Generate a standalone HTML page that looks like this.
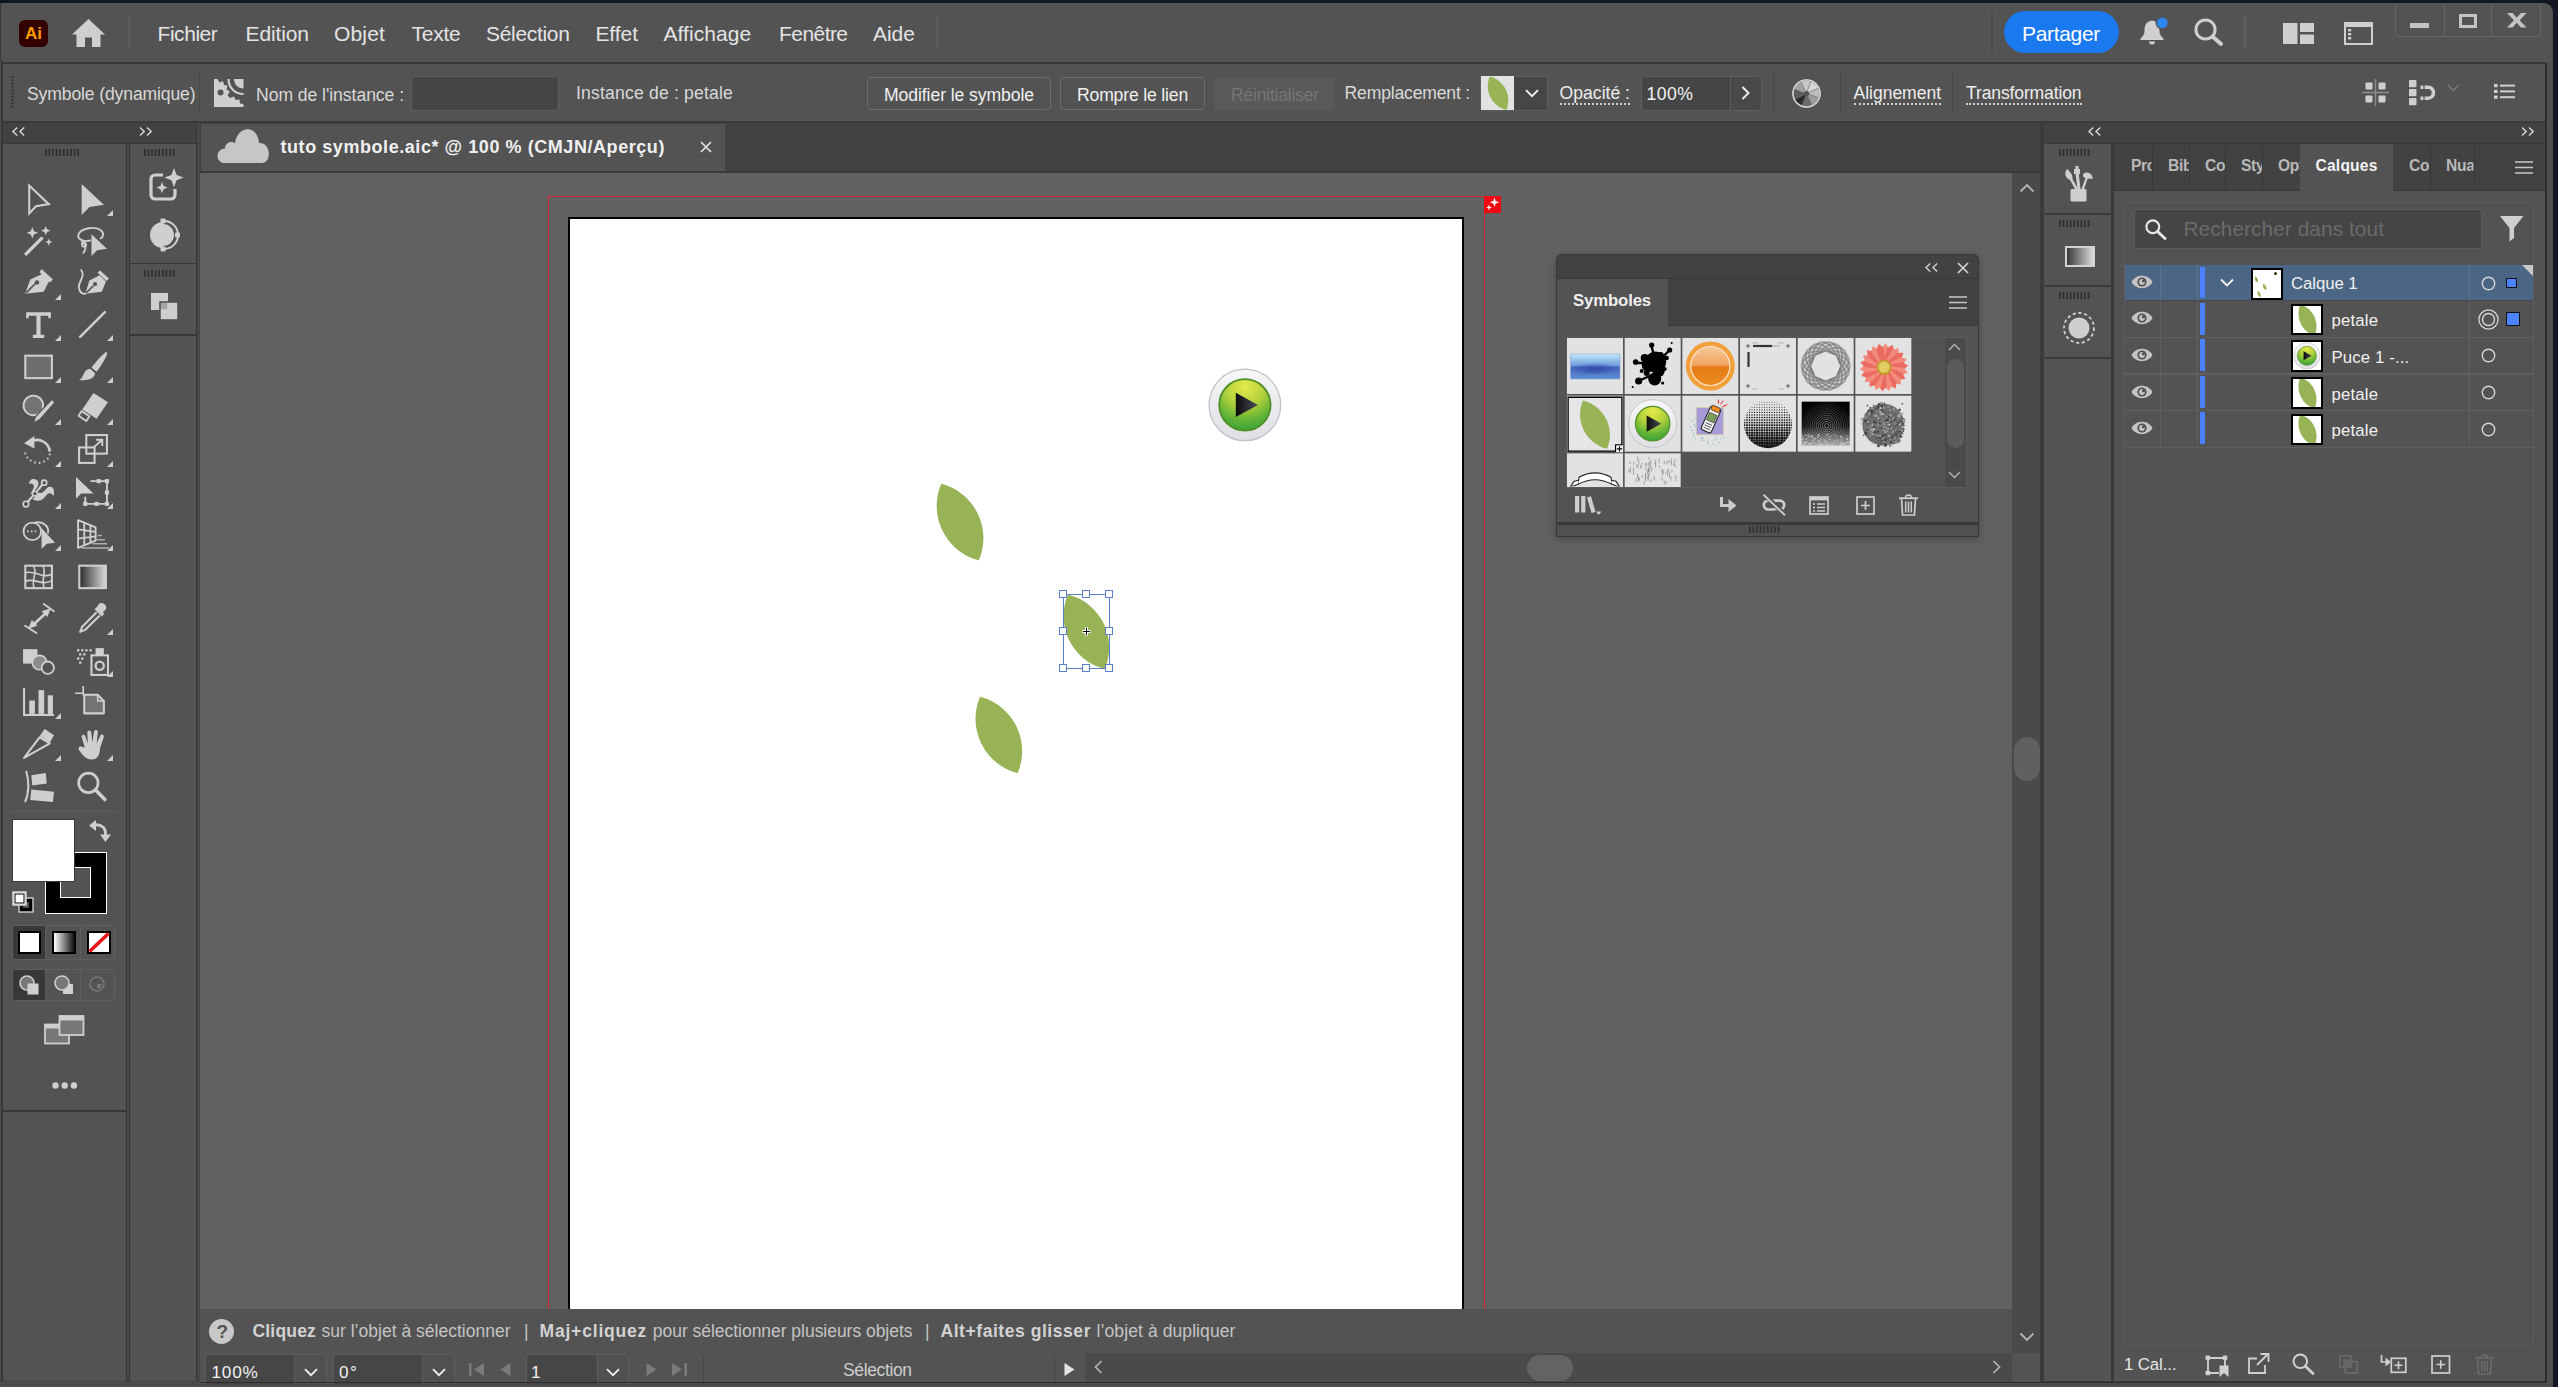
<!DOCTYPE html>
<html lang="fr"><head><meta charset="utf-8"><title>Adobe Illustrator - tuto symbole</title>
<style>
html,body{margin:0;padding:0;}
body{width:2558px;height:1387px;overflow:hidden;background:#121821;font-family:"Liberation Sans", sans-serif;}
#app{position:relative;width:2558px;height:1387px;overflow:hidden;}
#app div,#app svg,#app span{position:absolute;box-sizing:border-box;}
#app svg{overflow:visible;}
.t{white-space:pre;line-height:1;}

</style></head><body><div id="app">
<div style="left:0px;top:3px;width:2553px;height:1384px;background:#4d4d4d;border-radius:2px 9px 0 0;"></div>
<div style="left:0px;top:3px;width:2px;height:1380px;background:#3a3a3a;"></div>
<div style="left:1px;top:3px;width:2551px;height:58.7px;background:#535353;border-radius:2px 9px 0 0;"></div>
<div style="left:0px;top:61.7px;width:2546px;height:1.8999999999999986px;background:#3a3a3a;"></div>
<div style="left:2px;top:63.6px;width:2544px;height:57.4px;background:#535353;"></div>
<div style="left:0px;top:121px;width:2546px;height:2px;background:#3a3a3a;"></div>
<div style="left:2546px;top:61px;width:6px;height:1322px;background:#4f4f4f;"></div>
<div style="left:19px;top:20px;width:28.5px;height:27px;background:#330000;border-radius:6px;"></div>
<span class="t" style="left:25px;top:24.61px;font-size:17px;color:#ff9a00;font-weight:700;">Ai</span>
<svg style="left:72px;top:19px;" width="33" height="28" viewBox="0 0 33 28"><path d="M16.5 0 L33 15.5 H28.5 V28 H20 V18.5 H13 V28 H4.5 V15.5 H0 Z" fill="#cfcfcf"/></svg>
<div style="left:127.8px;top:14px;width:3.000000000000014px;height:35px;background:#5c5c5c;border-radius:1.5px;"></div>
<span class="t" style="left:157.5px;top:23.02px;font-size:21px;color:#e4e4e4;letter-spacing:-0.445px;">Fichier</span>
<span class="t" style="left:245.5px;top:23.02px;font-size:21px;color:#e4e4e4;letter-spacing:-0.131px;">Edition</span>
<span class="t" style="left:334px;top:23.02px;font-size:21px;color:#e4e4e4;letter-spacing:0.159px;">Objet</span>
<span class="t" style="left:411.6px;top:23.02px;font-size:21px;color:#e4e4e4;letter-spacing:-0.261px;">Texte</span>
<span class="t" style="left:486px;top:23.02px;font-size:21px;color:#e4e4e4;letter-spacing:-0.310px;">Sélection</span>
<span class="t" style="left:595.4px;top:23.02px;font-size:21px;color:#e4e4e4;letter-spacing:-0.042px;">Effet</span>
<span class="t" style="left:663.4px;top:23.02px;font-size:21px;color:#e4e4e4;letter-spacing:0.090px;">Affichage</span>
<span class="t" style="left:779px;top:23.02px;font-size:21px;color:#e4e4e4;letter-spacing:-0.554px;">Fenêtre</span>
<span class="t" style="left:873px;top:23.02px;font-size:21px;color:#e4e4e4;letter-spacing:-0.058px;">Aide</span>
<div style="left:936px;top:14px;width:3px;height:35px;background:#5c5c5c;border-radius:1.5px;"></div>
<div style="left:1991px;top:11px;width:2px;height:43px;background:#4c4c4c;"></div>
<div style="left:2003.5px;top:10.5px;width:115.0px;height:42.5px;background:#1a79ee;border-radius:22px;"></div>
<span class="t" style="left:2022px;top:23.02px;font-size:21px;color:#ffffff;letter-spacing:-0.318px;">Partager</span>
<svg style="left:2140px;top:18px;" width="30" height="28" viewBox="0 0 30 28"><path d="M12 2.5 C6 3 4.5 8 4.5 13 C4.5 17 2.5 18.5 0.5 20.5 V22 H23.5 V20.5 C21.5 18.5 19.5 17 19.5 13 C19.5 8 18 3 12 2.5 Z" fill="#cfcfcf"/><path d="M9 23.5 a3 3 0 0 0 6 0z" fill="#cfcfcf"/><circle cx="22.3" cy="4.8" r="6.8" fill="#535353"/><circle cx="22.3" cy="4.8" r="5.4" fill="#2b86ee"/></svg>
<svg style="left:2193.5px;top:18px;" width="30" height="28" viewBox="0 0 30 28"><circle cx="11.5" cy="11.5" r="9.6" fill="none" stroke="#cfcfcf" stroke-width="3"/><path d="M18.5 18.5 L27 26" stroke="#cfcfcf" stroke-width="4" stroke-linecap="round"/></svg>
<div style="left:2243px;top:14.5px;width:3.5px;height:34.5px;background:#5c5c5c;border-radius:1.5px;"></div>
<svg style="left:2282.5px;top:22.5px;" width="31" height="21" viewBox="0 0 31 21"><rect x="0" y="0" width="14.5" height="21" fill="#cfcfcf"/><rect x="17" y="0" width="14" height="9" fill="#cfcfcf"/><rect x="17" y="11.5" width="14" height="9.5" fill="#cfcfcf"/></svg>
<svg style="left:2344px;top:21.5px;" width="29" height="23" viewBox="0 0 29 23"><rect x="1" y="1" width="27" height="21" fill="none" stroke="#cfcfcf" stroke-width="2"/><rect x="1" y="1" width="27" height="4" fill="#cfcfcf"/><rect x="4" y="7" width="3.2" height="2.4" fill="#cfcfcf"/><rect x="4" y="11" width="3.2" height="2.4" fill="#cfcfcf"/><rect x="4" y="15" width="3.2" height="2.4" fill="#cfcfcf"/></svg>
<div style="left:2394.5px;top:3px;width:146.5px;height:33.5px;border:1.3px solid #666;border-top:none;border-radius:0 0 5px 5px;"></div>
<div style="left:2443.5px;top:3px;width:1.300000000000182px;height:33px;background:#666;"></div>
<div style="left:2491px;top:3px;width:1.300000000000182px;height:33px;background:#666;"></div>
<div style="left:2410px;top:23px;width:18.5px;height:5.300000000000001px;background:#c4c4c4;"></div>
<div style="left:2459px;top:14.3px;width:18.300000000000182px;height:14.0px;border:3.6px solid #c4c4c4;"></div>
<svg style="left:2506.5px;top:13px;" width="19.5" height="14.5" viewBox="0 0 19.5 14.5"><path d="M0 0 H5.6 L9.75 4.8 L13.9 0 H19.5 L12.6 7.25 L19.5 14.5 H13.9 L9.75 9.7 L5.6 14.5 H0 L6.9 7.25 Z" fill="#c4c4c4"/></svg>
<svg style="left:11px;top:76px;" width="3" height="34" viewBox="0 0 3 34"><rect x="0" y="0.0" width="3" height="1.8" fill="#3a3a3a"/><rect x="0" y="3.3" width="3" height="1.8" fill="#3a3a3a"/><rect x="0" y="6.6" width="3" height="1.8" fill="#3a3a3a"/><rect x="0" y="9.9" width="3" height="1.8" fill="#3a3a3a"/><rect x="0" y="13.2" width="3" height="1.8" fill="#3a3a3a"/><rect x="0" y="16.5" width="3" height="1.8" fill="#3a3a3a"/><rect x="0" y="19.8" width="3" height="1.8" fill="#3a3a3a"/><rect x="0" y="23.1" width="3" height="1.8" fill="#3a3a3a"/><rect x="0" y="26.4" width="3" height="1.8" fill="#3a3a3a"/><rect x="0" y="29.7" width="3" height="1.8" fill="#3a3a3a"/></svg>
<span class="t" style="left:27px;top:86.10px;font-size:17.6px;color:#d8d8d8;letter-spacing:-0.139px;">Symbole (dynamique)</span>
<div style="left:198.5px;top:71px;width:1.0px;height:43px;background:#494949;"></div>
<svg style="left:213.5px;top:78.5px;" width="29.5" height="28" viewBox="0 0 29.5 28"><path d="M0 0 L3.5 0 L5.5 3.5 L9 2 L10 6 L13.5 6.5 L12.5 10.5 L16 12.5 L13.5 16 L16 19 L20 17.5 L21.5 21 L25.5 20.5 L26 24.5 L29.5 25 V28 H0 Z" fill="#cfcfcf"/><circle cx="6.5" cy="13.5" r="3" fill="#535353"/><path d="M20 0 H29.5 V9.5 C24 9.5 20 5.5 20 0 Z" fill="#cfcfcf"/><path d="M14.5 0 C14.5 8.5 21 15 29.5 15" fill="none" stroke="#cfcfcf" stroke-width="2.2"/></svg>
<span class="t" style="left:256px;top:86.70px;font-size:17.6px;color:#d8d8d8;letter-spacing:-0.057px;">Nom de l'instance :</span>
<div style="left:410.5px;top:75.5px;width:148.0px;height:35.0px;background:#454545;border:1px solid #5e5e5e;border-radius:4px;"></div>
<span class="t" style="left:576px;top:84.50px;font-size:17.6px;color:#d8d8d8;letter-spacing:0.171px;">Instance de : petale</span>
<div style="left:867px;top:77px;width:183.5px;height:33px;border:1.6px solid #6c6c6c;border-radius:4px;"></div>
<span class="t" style="left:884px;top:86.80px;font-size:17.6px;color:#f0f0f0;letter-spacing:-0.082px;">Modifier le symbole</span>
<div style="left:1060px;top:77px;width:144.5px;height:33px;border:1.6px solid #6c6c6c;border-radius:4px;"></div>
<span class="t" style="left:1077px;top:86.80px;font-size:17.6px;color:#f0f0f0;letter-spacing:-0.174px;">Rompre le lien</span>
<div style="left:1213.5px;top:77px;width:121.5px;height:33px;background:#595959;border-radius:3px;"></div>
<span class="t" style="left:1231px;top:86.80px;font-size:17.6px;color:#757575;letter-spacing:-0.226px;">Réinitialiser</span>
<span class="t" style="left:1344.6px;top:85.10px;font-size:17.6px;color:#d8d8d8;letter-spacing:-0.194px;">Remplacement :</span>
<div style="left:1480px;top:75.5px;width:68px;height:35.0px;background:#464646;border:1px solid #5e5e5e;border-radius:3px;"></div>
<div style="left:1481px;top:76px;width:33px;height:34px;background:#e2e2e2;"></div>
<svg style="left:1481px;top:76px;overflow:hidden;" width="33" height="34" viewBox="0 0 33 34"><path d="M8.8 0.5 C2.8 14.3 10.6 30.2 25.3 34.0 C31.3 20.2 23.5 4.3 8.8 0.5 Z" fill="#98b256"/></svg>
<svg style="left:1524.5px;top:88.5px;" width="14" height="9" viewBox="0 0 14 9"><path d="M1 1.2 L7 7.2 L13 1.2" fill="none" stroke="#f0f0f0" stroke-width="1.9"/></svg>
<span class="t" style="left:1559.6px;top:85.10px;font-size:17.6px;color:#ececec;letter-spacing:-0.002px;">Opacité :</span>
<div style="left:1559.6px;top:102.6px;width:70.40000000000009px;height:2.4000000000000057px;border-top:2px dotted #d0d0d0;"></div>
<div style="left:1641px;top:75.5px;width:121px;height:35.0px;background:#454545;border:1px solid #5e5e5e;border-radius:4px;"></div>
<div style="left:1729.5px;top:76.5px;width:31.5px;height:33.0px;background:#494949;border-left:1px solid #5e5e5e;border-radius:0 3px 3px 0;"></div>
<span class="t" style="left:1646.5px;top:86.10px;font-size:17.6px;color:#f2f2f2;letter-spacing:0.500px;">100%</span>
<svg style="left:1740.5px;top:86px;" width="9" height="14" viewBox="0 0 9 14"><path d="M1.5 1 L7.5 7 L1.5 13" fill="none" stroke="#f0f0f0" stroke-width="1.9"/></svg>
<div style="left:1773px;top:71px;width:1px;height:43px;background:#494949;"></div>
<svg style="left:1792px;top:78.5px;" width="29" height="29" viewBox="0 0 29 29"><circle cx="14.5" cy="14.5" r="14" fill="#c9c9c9"/><path d="M14.5 14.5 L26.28 9.01 A13 13 0 0 1 26.72 18.95 Z" fill="#bdbdbd" stroke="#6a6a6a" stroke-width=".5"/><path d="M14.5 14.5 L26.72 18.95 A13 13 0 0 1 19.99 26.28 Z" fill="#9c9c9c" stroke="#6a6a6a" stroke-width=".5"/><path d="M14.5 14.5 L19.99 26.28 A13 13 0 0 1 10.05 26.72 Z" fill="#6a6a6a" stroke="#6a6a6a" stroke-width=".5"/><path d="M14.5 14.5 L10.05 26.72 A13 13 0 0 1 2.72 19.99 Z" fill="#2c2c2c" stroke="#6a6a6a" stroke-width=".5"/><path d="M14.5 14.5 L2.72 19.99 A13 13 0 0 1 2.28 10.05 Z" fill="#5c5c5c" stroke="#6a6a6a" stroke-width=".5"/><path d="M14.5 14.5 L2.28 10.05 A13 13 0 0 1 9.01 2.72 Z" fill="#a2a2a2" stroke="#6a6a6a" stroke-width=".5"/><path d="M14.5 14.5 L9.01 2.72 A13 13 0 0 1 18.95 2.28 Z" fill="#c8c8c8" stroke="#6a6a6a" stroke-width=".5"/><path d="M14.5 14.5 L18.95 2.28 A13 13 0 0 1 26.28 9.01 Z" fill="#d6d6d6" stroke="#6a6a6a" stroke-width=".5"/><circle cx="14.5" cy="14.5" r="13.6" fill="none" stroke="#d6d6d6" stroke-width="1.4"/><circle cx="14.5" cy="14.5" r="2.6" fill="#535353"/></svg>
<div style="left:1840px;top:71px;width:1px;height:43px;background:#494949;"></div>
<span class="t" style="left:1853.6px;top:85.10px;font-size:17.6px;color:#ececec;letter-spacing:-0.063px;">Alignement</span>
<div style="left:1853.6px;top:103.2px;width:87.40000000000009px;height:2.799999999999997px;border-top:2px dotted #d0d0d0;"></div>
<div style="left:1952px;top:71px;width:1px;height:43px;background:#494949;"></div>
<span class="t" style="left:1966px;top:85.10px;font-size:17.6px;color:#ececec;letter-spacing:-0.155px;">Transformation</span>
<div style="left:1966px;top:103.2px;width:115.5px;height:2.799999999999997px;border-top:2px dotted #d0d0d0;"></div>
<svg style="left:2362px;top:79px;" width="27" height="27" viewBox="0 0 27 27"><path d="M0 13.5 H27 M13.5 0 V27" stroke="#8c8c8c" stroke-width="1.5"/><g fill="#cfcfcf"><rect x="3.5" y="3.5" width="7" height="7" rx="1"/><rect x="16.5" y="3.5" width="7" height="7" rx="1"/><rect x="3.5" y="16.5" width="7" height="7" rx="1"/><rect x="16.5" y="16.5" width="7" height="7" rx="1"/></g></svg>
<svg style="left:2408.5px;top:80px;" width="27" height="26" viewBox="0 0 27 26"><g fill="#cfcfcf"><rect x="0" y="0" width="7.5" height="7.2" rx="1"/><rect x="0" y="9" width="7.5" height="7.2" rx="1"/><rect x="0" y="18" width="7.5" height="7.2" rx="1"/></g><path d="M11.5 7.2 H19 A5.5 5.5 0 0 1 19 18.2 H11.5" fill="none" stroke="#cfcfcf" stroke-width="3.6"/><path d="M15 4.5 V10 M15 15.5 V21" stroke="#535353" stroke-width="1.2"/></svg>
<svg style="left:2446.5px;top:84.2px;" width="13" height="8" viewBox="0 0 13 8"><path d="M1 1 L6.5 6.5 L12 1" fill="none" stroke="#777" stroke-width="1.6"/></svg>
<svg style="left:2493.5px;top:83.6px;" width="21" height="15" viewBox="0 0 21 15"><g fill="#cfcfcf"><rect x="0" y="0" width="3.6" height="3.2"/><rect x="0" y="5.8" width="3.6" height="3.2"/><rect x="0" y="11.6" width="3.6" height="3.2"/><rect x="6" y="0.6" width="15" height="2"/><rect x="6" y="6.4" width="15" height="2"/><rect x="6" y="12.2" width="15" height="2"/></g></svg>
<div style="left:2px;top:123px;width:194px;height:20px;background:#424242;"></div>
<svg style="left:12px;top:127px;" width="14" height="9" viewBox="0 0 14 9"><path d="M5.2 0.5 L1 4.5 L5.2 8.5 M12.2 0.5 L8 4.5 L12.2 8.5" fill="none" stroke="#d8d8d8" stroke-width="1.4"/></svg>
<svg style="left:139px;top:127px;" width="14" height="9" viewBox="0 0 14 9"><path d="M1 0.5 L5.2 4.5 L1 8.5 M8 0.5 L12.2 4.5 L8 8.5" fill="none" stroke="#d8d8d8" stroke-width="1.4"/></svg>
<div style="left:0px;top:143px;width:200px;height:1239px;background:#474747;"></div>
<div style="left:0px;top:143px;width:200px;height:1.1999999999999886px;background:#373737;"></div>
<div style="left:0px;top:61px;width:1.4px;height:1322px;background:#4d4d4d;"></div>
<div style="left:1.4px;top:61px;width:1.3000000000000003px;height:1321px;background:#373737;"></div>
<div style="left:2.7px;top:144px;width:123.0px;height:966.4000000000001px;background:#535353;"></div>
<div style="left:2.7px;top:1110.4px;width:123.0px;height:1.5px;background:#373737;"></div>
<div style="left:2.7px;top:1111.9px;width:123.0px;height:269.0999999999999px;background:#535353;"></div>
<div style="left:125.7px;top:144px;width:1.3999999999999915px;height:1238px;background:#373737;"></div>
<div style="left:129.9px;top:144px;width:65.69999999999999px;height:118.69999999999999px;background:#535353;"></div>
<div style="left:129.9px;top:262.7px;width:65.69999999999999px;height:1.5px;background:#373737;"></div>
<div style="left:129.9px;top:264.2px;width:65.69999999999999px;height:69.90000000000003px;background:#535353;"></div>
<div style="left:129.9px;top:334.1px;width:65.69999999999999px;height:1.5px;background:#373737;"></div>
<div style="left:129.9px;top:335.6px;width:65.69999999999999px;height:1045.4px;background:#535353;"></div>
<div style="left:128.6px;top:144px;width:1.3000000000000114px;height:1238px;background:#373737;"></div>
<div style="left:195.6px;top:123px;width:1.4000000000000057px;height:1259px;background:#373737;"></div>
<div style="left:197px;top:123px;width:3px;height:1259px;background:#474747;"></div>
<svg style="left:45px;top:149px;" width="36" height="7" viewBox="0 0 36 7"><rect x="0.0" y="0" width="1.6" height="7" fill="#2e2e2e"/><rect x="3.6" y="0" width="1.6" height="7" fill="#2e2e2e"/><rect x="7.2" y="0" width="1.6" height="7" fill="#2e2e2e"/><rect x="10.8" y="0" width="1.6" height="7" fill="#2e2e2e"/><rect x="14.4" y="0" width="1.6" height="7" fill="#2e2e2e"/><rect x="18.0" y="0" width="1.6" height="7" fill="#2e2e2e"/><rect x="21.6" y="0" width="1.6" height="7" fill="#2e2e2e"/><rect x="25.2" y="0" width="1.6" height="7" fill="#2e2e2e"/><rect x="28.8" y="0" width="1.6" height="7" fill="#2e2e2e"/><rect x="32.4" y="0" width="1.6" height="7" fill="#2e2e2e"/></svg>
<svg style="left:144px;top:149px;" width="34" height="7" viewBox="0 0 34 7"><rect x="0.0" y="0" width="1.6" height="7" fill="#2e2e2e"/><rect x="3.6" y="0" width="1.6" height="7" fill="#2e2e2e"/><rect x="7.2" y="0" width="1.6" height="7" fill="#2e2e2e"/><rect x="10.8" y="0" width="1.6" height="7" fill="#2e2e2e"/><rect x="14.4" y="0" width="1.6" height="7" fill="#2e2e2e"/><rect x="18.0" y="0" width="1.6" height="7" fill="#2e2e2e"/><rect x="21.6" y="0" width="1.6" height="7" fill="#2e2e2e"/><rect x="25.2" y="0" width="1.6" height="7" fill="#2e2e2e"/><rect x="28.8" y="0" width="1.6" height="7" fill="#2e2e2e"/></svg>
<svg style="left:144px;top:270px;" width="34" height="7" viewBox="0 0 34 7"><rect x="0.0" y="0" width="1.6" height="7" fill="#2e2e2e"/><rect x="3.6" y="0" width="1.6" height="7" fill="#2e2e2e"/><rect x="7.2" y="0" width="1.6" height="7" fill="#2e2e2e"/><rect x="10.8" y="0" width="1.6" height="7" fill="#2e2e2e"/><rect x="14.4" y="0" width="1.6" height="7" fill="#2e2e2e"/><rect x="18.0" y="0" width="1.6" height="7" fill="#2e2e2e"/><rect x="21.6" y="0" width="1.6" height="7" fill="#2e2e2e"/><rect x="25.2" y="0" width="1.6" height="7" fill="#2e2e2e"/><rect x="28.8" y="0" width="1.6" height="7" fill="#2e2e2e"/></svg>
<svg style="left:22.200000000000003px;top:182.5px;" width="33" height="33" viewBox="0 0 32 32"><path d="M7 2.5 L7 29.5 L13.6 22.6 L26 20.5 Z" fill="none" stroke="#cfcfcf" stroke-width="2" stroke-linejoin="miter"/></svg>
<svg style="left:75.8px;top:182.5px;" width="33" height="33" viewBox="0 0 32 32"><path d="M5.5 1 L5.5 31 L13 23.2 L27 21 Z" fill="#cfcfcf"/></svg>
<svg style="left:107.3px;top:210px;" width="6" height="6" viewBox="0 0 6 6"><path d="M6 0 V6 H0 Z" fill="#cfcfcf"/></svg>
<svg style="left:22.200000000000003px;top:224.5px;" width="33" height="33" viewBox="0 0 32 32"><path d="M4 28 L19 13" stroke="#cfcfcf" stroke-width="3.2" stroke-linecap="round"/><path d="M10 2 l1.6 4 4 1.6 -4 1.6 -1.6 4 -1.6 -4 -4 -1.6 4 -1.6z M23 1 l1.3 3.2 3.2 1.3 -3.2 1.3 -1.3 3.2 -1.3 -3.2 -3.2 -1.3 3.2 -1.3z M26 13 l1 2.5 2.5 1 -2.5 1 -1 2.5 -1 -2.5 -2.5 -1 2.5 -1z" fill="#cfcfcf"/></svg>
<svg style="left:75.8px;top:224.5px;" width="33" height="33" viewBox="0 0 32 32"><path d="M14 15 C6 17 0 13 3 8 C6 3 18 1 24 5 C28 8 26 12 24 13 M8 16 C5 17 5 21 8 21 C11 21 10 17 7 17 C10 19 10 24 7 27" fill="none" stroke="#cfcfcf" stroke-width="1.8" stroke-linecap="round"/><path d="M15 9 L15 30 L20.5 24.5 L30 23 Z" fill="#cfcfcf"/></svg>
<svg style="left:22.200000000000003px;top:266.0px;" width="33" height="33" viewBox="0 0 32 32"><path d="M3 27 L8 13 L19 8 L26 15 L21 25 Z M19 3 L30 13 L27 16 L17 6 Z" fill="#cfcfcf"/><path d="M4 26 L13 17" stroke="#535353" stroke-width="1.6"/><circle cx="14.5" cy="16" r="2.2" fill="#535353"/></svg>
<svg style="left:54.7px;top:293.5px;" width="6" height="6" viewBox="0 0 6 6"><path d="M6 0 V6 H0 Z" fill="#cfcfcf"/></svg>
<svg style="left:75.8px;top:266.0px;" width="33" height="33" viewBox="0 0 32 32"><path d="M9 27 L13 14 L23 9 L29 15 L25 25 Z M23 4 L32 12 L29.5 14.5 L21 6.5 Z" fill="#cfcfcf"/><path d="M10 26 L17 19" stroke="#535353" stroke-width="1.5"/><circle cx="18.5" cy="17.5" r="2" fill="#535353"/><path d="M5 4 C10 10 1 16 3 22 C4 26 7 27 9 27" fill="none" stroke="#cfcfcf" stroke-width="1.8" stroke-linecap="round"/></svg>
<svg style="left:22.200000000000003px;top:307.5px;" width="33" height="33" viewBox="0 0 32 32"><path d="M4 4 H28 V10 H25.5 V7.5 H18 V26 H21.5 V29 H10.5 V26 H14 V7.5 H6.5 V10 H4 Z" fill="#cfcfcf"/></svg>
<svg style="left:54.7px;top:335px;" width="6" height="6" viewBox="0 0 6 6"><path d="M6 0 V6 H0 Z" fill="#cfcfcf"/></svg>
<svg style="left:75.8px;top:307.5px;" width="33" height="33" viewBox="0 0 32 32"><path d="M4 28 L28 4" stroke="#cfcfcf" stroke-width="2.4" stroke-linecap="round"/></svg>
<svg style="left:107.3px;top:335px;" width="6" height="6" viewBox="0 0 6 6"><path d="M6 0 V6 H0 Z" fill="#cfcfcf"/></svg>
<svg style="left:22.200000000000003px;top:349.5px;" width="33" height="33" viewBox="0 0 32 32"><rect x="3.2" y="5.5" width="25.8" height="21.8" fill="#6e6e6e" stroke="#cfcfcf" stroke-width="2"/></svg>
<svg style="left:54.7px;top:377px;" width="6" height="6" viewBox="0 0 6 6"><path d="M6 0 V6 H0 Z" fill="#cfcfcf"/></svg>
<svg style="left:75.8px;top:349.5px;" width="33" height="33" viewBox="0 0 32 32"><path d="M30 2 C31 4 27 12 20 21 L15 17 C22 8 28 2 30 2 Z M14 18.5 L18.5 22.5 C18 28 11 30 3 29 C7 27 7 23 9 20.5 C10.5 18.5 12.5 18 14 18.5 Z" fill="#cfcfcf"/></svg>
<svg style="left:107.3px;top:377px;" width="6" height="6" viewBox="0 0 6 6"><path d="M6 0 V6 H0 Z" fill="#cfcfcf"/></svg>
<svg style="left:22.200000000000003px;top:391.0px;" width="33" height="33" viewBox="0 0 32 32"><circle cx="11" cy="14" r="9.5" fill="#737373" stroke="#cfcfcf" stroke-width="1.8"/><path d="M13 25 L29 8 L32 11 L17 28 L11 31 Z" fill="#cfcfcf" stroke="#535353" stroke-width="1.2"/></svg>
<svg style="left:54.7px;top:418.5px;" width="6" height="6" viewBox="0 0 6 6"><path d="M6 0 V6 H0 Z" fill="#cfcfcf"/></svg>
<svg style="left:75.8px;top:391.0px;" width="33" height="33" viewBox="0 0 32 32"><path d="M17 2 L31 11 L20 27 L6 18 Z" fill="#cfcfcf"/><path d="M5.5 19.5 L13 24.5 L10 29 L2.5 24 Z" fill="none" stroke="#cfcfcf" stroke-width="1.8" stroke-linejoin="round"/></svg>
<svg style="left:107.3px;top:418.5px;" width="6" height="6" viewBox="0 0 6 6"><path d="M6 0 V6 H0 Z" fill="#cfcfcf"/></svg>
<svg style="left:22.200000000000003px;top:433.0px;" width="33" height="33" viewBox="0 0 32 32"><path d="M8 9 C15 4 26 8 27 18" fill="none" stroke="#cfcfcf" stroke-width="2.6"/><path d="M2 10 L12 3 L12 15 Z" fill="#cfcfcf"/><path d="M27 20 C26 27 18 31 11 28 C6 26 3 22 3 18" fill="none" stroke="#cfcfcf" stroke-width="2" stroke-dasharray="1.5 3"/></svg>
<svg style="left:54.7px;top:460.5px;" width="6" height="6" viewBox="0 0 6 6"><path d="M6 0 V6 H0 Z" fill="#cfcfcf"/></svg>
<svg style="left:75.8px;top:433.0px;" width="33" height="33" viewBox="0 0 32 32"><rect x="3" y="14" width="15" height="15" fill="none" stroke="#cfcfcf" stroke-width="2"/><rect x="10" y="2" width="20" height="18" fill="none" stroke="#cfcfcf" stroke-width="2"/><path d="M17 14 L25 7 M19.5 6.5 H25.5 V12.5" fill="none" stroke="#cfcfcf" stroke-width="1.8"/></svg>
<svg style="left:107.3px;top:460.5px;" width="6" height="6" viewBox="0 0 6 6"><path d="M6 0 V6 H0 Z" fill="#cfcfcf"/></svg>
<svg style="left:22.200000000000003px;top:475.5px;" width="33" height="33" viewBox="0 0 32 32"><path d="M9 3.5 C14 1.5 18 6 15 10.5 C13 13.5 14 16.5 18 16.5 C22 16.5 22.5 11.5 26.5 10.5 C30.5 9.5 32 15 30.5 19.5 C29 17 27.5 16 25.5 17 C22.5 18.5 21.5 24 15.5 24 C9.5 24 7 19 9.5 15 C11 12.5 12.5 10 10.5 8 C9.5 7 8 7.2 7 8.2 C6.8 6 7.8 4.2 9 3.5 Z" fill="#cfcfcf"/><path d="M3.5 27.5 L21.5 6.5" stroke="#cfcfcf" stroke-width="1.8"/><path d="M9 21 L16 13" stroke="#535353" stroke-width="4.2"/><path d="M3.5 27.5 L21.5 6.5" stroke="#cfcfcf" stroke-width="1.8"/><circle cx="3.8" cy="27.2" r="2.7" fill="#535353" stroke="#cfcfcf" stroke-width="1.6"/><circle cx="21.5" cy="6.5" r="2.5" fill="#535353" stroke="#cfcfcf" stroke-width="1.6"/><circle cx="12.6" cy="17" r="2.3" fill="#535353" stroke="#cfcfcf" stroke-width="1.4"/></svg>
<svg style="left:54.7px;top:503px;" width="6" height="6" viewBox="0 0 6 6"><path d="M6 0 V6 H0 Z" fill="#cfcfcf"/></svg>
<svg style="left:75.8px;top:475.5px;" width="33" height="33" viewBox="0 0 32 32"><path d="M0 1 L0 22 L5 17 L17 17 Z" fill="#cfcfcf"/><path d="M14 5 H30 V27 H9 V20" fill="none" stroke="#cfcfcf" stroke-width="1.8"/><g fill="#cfcfcf"><rect x="20" y="3" width="4" height="4"/><rect x="28" y="3" width="4" height="4"/><rect x="28" y="14" width="4" height="4"/><rect x="28" y="25" width="4" height="4"/><rect x="18" y="25" width="4" height="4"/><rect x="7" y="25" width="4" height="4"/></g></svg>
<svg style="left:107.3px;top:503px;" width="6" height="6" viewBox="0 0 6 6"><path d="M6 0 V6 H0 Z" fill="#cfcfcf"/></svg>
<svg style="left:22.200000000000003px;top:517.5px;" width="33" height="33" viewBox="0 0 32 32"><circle cx="10" cy="13" r="8.5" fill="none" stroke="#cfcfcf" stroke-width="1.8"/><path d="M11 5 C20 2 27 8 25 15" fill="none" stroke="#cfcfcf" stroke-width="1.8"/><path d="M5 13 H14" stroke="#cfcfcf" stroke-width="1.8" stroke-dasharray="1.6 2"/><path d="M19 10 L19 30 L24 25 L32 24 Z" fill="#cfcfcf"/></svg>
<svg style="left:54.7px;top:545px;" width="6" height="6" viewBox="0 0 6 6"><path d="M6 0 V6 H0 Z" fill="#cfcfcf"/></svg>
<svg style="left:75.8px;top:517.5px;" width="33" height="33" viewBox="0 0 32 32"><path d="M2 2 L19 9 V22 L2 29 Z M2 11 L19 13.5 M2 20 L19 17.8 M8 4.5 V26.5 M14 7 V24" fill="none" stroke="#cfcfcf" stroke-width="1.8" stroke-linejoin="round"/><path d="M21 17 H25 M20 21 H28 M16 25 H30 M5 29 H32" stroke="#cfcfcf" stroke-width="1.4" opacity=".75"/></svg>
<svg style="left:107.3px;top:545px;" width="6" height="6" viewBox="0 0 6 6"><path d="M6 0 V6 H0 Z" fill="#cfcfcf"/></svg>
<svg style="left:22.200000000000003px;top:559.5px;" width="33" height="33" viewBox="0 0 32 32"><rect x="3.2" y="5.5" width="25.8" height="21.8" fill="none" stroke="#cfcfcf" stroke-width="2"/><path d="M3.2 12.5 C12 9 19 19 29 13.5 M3.2 21 C11 16 19 26 29 20 M11 5.5 C16 12 8 20 12 27.3 M20 5.5 C25 12 17 20 22 27.3" fill="none" stroke="#cfcfcf" stroke-width="1.6"/></svg>
<svg style="left:75.8px;top:559.5px;" width="33" height="33" viewBox="0 0 32 32"><defs><linearGradient id="tg" x1="0" x2="1"><stop offset="0" stop-color="#2c2c2c"/><stop offset="1" stop-color="#dadada"/></linearGradient></defs><rect x="3.2" y="5.5" width="25.8" height="21.8" fill="url(#tg)" stroke="#cfcfcf" stroke-width="2"/></svg>
<svg style="left:22.200000000000003px;top:601.5px;" width="33" height="33" viewBox="0 0 32 32"><path d="M3 23 L14 30 M21 2 L31 9" stroke="#cfcfcf" stroke-width="1.8" stroke-linecap="round"/><path d="M10 23 L25 9" stroke="#cfcfcf" stroke-width="2.6"/><path d="M6 26 L9.5 17.5 L15 23 Z M28 6 L24.5 14.5 L19 9 Z" fill="#cfcfcf"/></svg>
<svg style="left:75.8px;top:601.5px;" width="33" height="33" viewBox="0 0 32 32"><path d="M22 2 C25 -1 31 3 29 7 L26 10 L27.5 11.5 L25 14 L18 7 L20.5 4.5 Z" fill="#cfcfcf"/><path d="M20 10 L6 24 L4 29 L9 27 L23 13" fill="none" stroke="#cfcfcf" stroke-width="2" stroke-linejoin="round"/></svg>
<svg style="left:107.3px;top:629px;" width="6" height="6" viewBox="0 0 6 6"><path d="M6 0 V6 H0 Z" fill="#cfcfcf"/></svg>
<svg style="left:22.200000000000003px;top:643.5px;" width="33" height="33" viewBox="0 0 32 32"><rect x="1" y="5" width="14" height="14" fill="#cfcfcf"/><circle cx="17" cy="18" r="7" fill="#8a8a8a" stroke="#cfcfcf" stroke-width="1.6"/><circle cx="25" cy="23" r="6" fill="#535353" stroke="#cfcfcf" stroke-width="1.8"/></svg>
<svg style="left:75.8px;top:643.5px;" width="33" height="33" viewBox="0 0 32 32"><rect x="15" y="11" width="16" height="19" fill="none" stroke="#cfcfcf" stroke-width="2"/><rect x="19" y="4" width="8" height="7" fill="#cfcfcf"/><circle cx="23" cy="21" r="4" fill="none" stroke="#cfcfcf" stroke-width="2.2"/><g fill="#cfcfcf"><rect x="1" y="5" width="2.2" height="2.2"/><rect x="5" y="5" width="2.2" height="2.2"/><rect x="9" y="5" width="2.2" height="2.2"/><rect x="13" y="5" width="2.2" height="2.2"/><rect x="3" y="9" width="2.2" height="2.2"/><rect x="7" y="9" width="2.2" height="2.2"/><rect x="1" y="13" width="2.2" height="2.2"/><rect x="5" y="13" width="2.2" height="2.2"/><rect x="3" y="17" width="2.2" height="2.2"/></g></svg>
<svg style="left:107.3px;top:671px;" width="6" height="6" viewBox="0 0 6 6"><path d="M6 0 V6 H0 Z" fill="#cfcfcf"/></svg>
<svg style="left:22.200000000000003px;top:685.0px;" width="33" height="33" viewBox="0 0 32 32"><path d="M2 3 V29 H31" fill="none" stroke="#cfcfcf" stroke-width="2"/><rect x="7" y="15" width="5.5" height="13" fill="#cfcfcf"/><rect x="16" y="5" width="5.5" height="23" fill="#cfcfcf"/><rect x="25" y="10" width="5" height="18" fill="#cfcfcf"/></svg>
<svg style="left:54.7px;top:712.5px;" width="6" height="6" viewBox="0 0 6 6"><path d="M6 0 V6 H0 Z" fill="#cfcfcf"/></svg>
<svg style="left:75.8px;top:685.0px;" width="33" height="33" viewBox="0 0 32 32"><path d="M7 1 V10 M-1 8 H7" stroke="#cfcfcf" stroke-width="1.6" fill="none"/><path d="M8 9.5 H21 L27 15.5 V27.5 H8 Z" fill="#737373" stroke="#cfcfcf" stroke-width="2" stroke-linejoin="round"/><path d="M21 9.5 V15.5 H27" fill="none" stroke="#cfcfcf" stroke-width="1.6"/></svg>
<svg style="left:22.200000000000003px;top:727.5px;" width="33" height="33" viewBox="0 0 32 32"><path d="M2 29 L17 9 L27 15 Z" fill="none" stroke="#cfcfcf" stroke-width="2" stroke-linejoin="round"/><path d="M17 8 L22 1 L31 7 L27 14 Z" fill="#cfcfcf"/></svg>
<svg style="left:54.7px;top:755px;" width="6" height="6" viewBox="0 0 6 6"><path d="M6 0 V6 H0 Z" fill="#cfcfcf"/></svg>
<svg style="left:75.8px;top:727.5px;" width="33" height="33" viewBox="0 0 32 32"><path d="M8.5 19 L5.5 9 C4.8 6.5 8 5.3 9 8 L11.5 15 L11 4.5 C11 1.8 14.6 1.8 14.8 4.5 L15.8 14 L17.5 3.5 C18 1 21.5 1.5 21.2 4.2 L20 15 L23.5 7.5 C24.6 5.2 27.8 6.6 26.8 9.2 L23.5 19 C23 26 21 30.5 15.5 30.5 C10 30.5 7 27 3 21.5 C1.2 19 4 17 6 18.5 Z" fill="#cfcfcf"/></svg>
<svg style="left:107.3px;top:755px;" width="6" height="6" viewBox="0 0 6 6"><path d="M6 0 V6 H0 Z" fill="#cfcfcf"/></svg>
<svg style="left:22.200000000000003px;top:770.0px;" width="33" height="33" viewBox="0 0 32 32"><path d="M4 1 C7 10 7 22 3 31" fill="none" stroke="#cfcfcf" stroke-width="2"/><path d="M9 5 L23 3 L24 13 L10 15 Z M9 19 L31 21 L30 31 L8 29 Z" fill="#cfcfcf"/></svg>
<svg style="left:75.8px;top:770.0px;" width="33" height="33" viewBox="0 0 32 32"><circle cx="12" cy="12.5" r="9.4" fill="none" stroke="#cfcfcf" stroke-width="2.6"/><path d="M19 19.5 L28 28.5" stroke="#cfcfcf" stroke-width="3.4" stroke-linecap="round"/></svg>
<svg style="left:149px;top:167px;" width="34" height="34" viewBox="0 0 34 34"><rect x="2" y="8" width="24" height="24" rx="4" fill="none" stroke="#cfcfcf" stroke-width="3.2"/><rect x="14" y="0" width="20" height="22" fill="#535353"/><path d="M25 1 l2.6 7 7 2.6 -7 2.6 -2.6 7 -2.6 -7 -7 -2.6 7 -2.6z M13 15 l1.6 4 4 1.6 -4 1.6 -1.6 4 -1.6 -4 -4 -1.6 4 -1.6z" fill="#cfcfcf"/></svg>
<svg style="left:148px;top:218px;" width="34" height="34" viewBox="0 0 34 34"><circle cx="15" cy="17" r="13" fill="#cfcfcf"/><path d="M15 3.5 A13.5 13.5 0 0 1 15 30.5" fill="none" stroke="#535353" stroke-width="5"/><path d="M16 3 A14 14 0 0 1 16 31" fill="none" stroke="#cfcfcf" stroke-width="2"/><rect x="12.5" y="0.5" width="5" height="5" rx="1" fill="#cfcfcf"/><rect x="12.5" y="28.5" width="5" height="5" rx="1" fill="#cfcfcf"/><rect x="27" y="14.5" width="5" height="5" rx="1" fill="#cfcfcf"/></svg>
<svg style="left:151px;top:293px;" width="28" height="28" viewBox="0 0 28 28"><rect x="0" y="0" width="17" height="17" fill="#cfcfcf"/><rect x="9" y="9" width="18" height="18" fill="#cfcfcf" stroke="#535353" stroke-width="1.6"/><rect x="9.8" y="9.8" width="6.4" height="6.4" fill="#535353" opacity=".35"/></svg>
<div style="left:12px;top:811px;width:104px;height:1px;background:#5e5e5e;"></div>
<div style="left:45px;top:852px;width:62px;height:62px;background:#000;border:1px solid #fff;"></div>
<div style="left:60px;top:867px;width:31px;height:31px;background:#535353;border:1px solid #fff;"></div>
<div style="left:12px;top:819px;width:63px;height:63px;background:#fff;border:1px solid #3a3a3a;"></div>
<svg style="left:89px;top:820px;" width="22" height="22" viewBox="0 0 22 22"><path d="M5 5 C13 4 17 8 16.5 15" fill="none" stroke="#cfcfcf" stroke-width="3"/><path d="M0 5.5 L7 0 V11 Z M16.5 22 L11 14.5 H22 Z" fill="#cfcfcf"/></svg>
<svg style="left:12px;top:891px;" width="22" height="22" viewBox="0 0 22 22"><rect x="7" y="7" width="14" height="14" fill="#000" stroke="#cfcfcf" stroke-width="1.4"/><rect x="11" y="11" width="6" height="6" fill="#535353"/><rect x="1" y="1" width="13" height="13" fill="#fff" stroke="#cfcfcf" stroke-width="1.6"/><rect x="3" y="3" width="9" height="9" fill="#fff" stroke="#000" stroke-width="1"/></svg>
<div style="left:12px;top:925px;width:103px;height:35px;border:1px solid #5e5e5e;border-radius:3px;"></div>
<div style="left:13px;top:926px;width:32px;height:33px;background:#383838;border-radius:2px 0 0 2px;"></div>
<div style="left:45px;top:926px;width:1px;height:33px;background:#5e5e5e;"></div>
<div style="left:80px;top:926px;width:1px;height:33px;background:#5e5e5e;"></div>
<div style="left:12px;top:968.5px;width:103px;height:32.0px;border:1px solid #5e5e5e;border-radius:3px;"></div>
<div style="left:13px;top:969.5px;width:32px;height:30.0px;background:#383838;border-radius:2px 0 0 2px;"></div>
<div style="left:45px;top:969.5px;width:1px;height:30.0px;background:#5e5e5e;"></div>
<div style="left:80px;top:969.5px;width:1px;height:30.0px;background:#5e5e5e;"></div>
<div style="left:18px;top:931px;width:23px;height:23px;background:#fff;border:2px solid #000;"></div>
<div style="left:52px;top:931px;width:24px;height:23px;border:2px solid #000;background:linear-gradient(90deg,#fff,#111);"></div>
<svg style="left:87px;top:931px;" width="24" height="23" viewBox="0 0 24 23"><rect x="1" y="1" width="22" height="21" fill="#fff" stroke="#000" stroke-width="2"/><path d="M2.5 20.5 L21.5 2.5" stroke="#e8141c" stroke-width="3.6"/></svg>
<svg style="left:19px;top:975px;" width="20" height="20" viewBox="0 0 20 20"><circle cx="8" cy="8" r="7" fill="#777" stroke="#cfcfcf" stroke-width="1.6"/><rect x="8.5" y="8.5" width="11" height="11" fill="#cfcfcf"/></svg>
<svg style="left:54px;top:975px;" width="20" height="20" viewBox="0 0 20 20"><rect x="9" y="9" width="10" height="10" fill="#cfcfcf"/><circle cx="8" cy="8" r="7" fill="#777" stroke="#cfcfcf" stroke-width="1.6"/></svg>
<svg style="left:89px;top:975.5px;" width="18" height="18" viewBox="0 0 18 18"><circle cx="8" cy="8" r="7" fill="none" stroke="#777" stroke-width="1.6"/><path d="M8 8 h5 a5 5 0 0 1 -5 5z" fill="#777"/></svg>
<svg style="left:44px;top:1015px;" width="41" height="30" viewBox="0 0 41 30"><rect x="1" y="9.5" width="24" height="19" fill="#777" stroke="#cfcfcf" stroke-width="1.8"/><rect x="1" y="9.5" width="24" height="4" fill="#cfcfcf"/><rect x="15.5" y="1" width="24" height="19" fill="#777" stroke="#cfcfcf" stroke-width="1.8"/><rect x="15.5" y="1" width="24" height="4.5" fill="#cfcfcf"/></svg>
<svg style="left:52px;top:1082px;" width="26" height="8" viewBox="0 0 26 8"><circle cx="3.5" cy="3.5" r="3.2" fill="#cfcfcf"/><circle cx="12.7" cy="3.5" r="3.2" fill="#cfcfcf"/><circle cx="21.9" cy="3.5" r="3.2" fill="#cfcfcf"/></svg>
<div style="left:200px;top:123px;width:1840px;height:49px;background:#424242;"></div>
<div style="left:201px;top:124px;width:523.5px;height:47px;background:#535353;"></div>
<div style="left:200px;top:171px;width:1840px;height:2px;background:#3a3a3a;"></div>
<div style="left:2040px;top:123px;width:4px;height:1259px;background:#3a3a3a;"></div>
<svg style="left:216.5px;top:127.5px;" width="53" height="36" viewBox="0 0 53 36"><path d="M8 35 C-2 35 -2 21 8 20.5 C8 14.5 15 12.5 18 15.5 C20 -3 41 -4 42 15 C54 14 55 35 45 35 Z" fill="#c6c6c6"/></svg>
<span class="t" style="left:280.5px;top:137.76px;font-size:18px;color:#f0f0f0;font-weight:700;letter-spacing:0.560px;">tuto symbole.aic* @ 100 % (CMJN/Aperçu)</span>
<svg style="left:700px;top:141px;" width="12" height="12" viewBox="0 0 12 12"><path d="M1 1 L11 11 M11 1 L1 11" stroke="#e6e6e6" stroke-width="1.6"/></svg>
<div style="left:200px;top:173px;width:1812px;height:1136px;background:#616161;"></div>
<div style="left:548px;top:196px;width:937px;height:1113px;border:1.8px solid #d2232a;border-bottom:none;"></div>
<div style="left:568px;top:217px;width:896px;height:1092px;background:#fff;border:2px solid #000;border-bottom:none;"></div>
<svg style="left:1484px;top:196px;" width="17" height="17" viewBox="0 0 17 17"><rect width="17" height="17" fill="#ee0a12"/><path d="M10.5 1.5 l1.2 3.6 3.6 1.2 -3.6 1.2 -1.2 3.6 -1.2 -3.6 -3.6 -1.2 3.6 -1.2z M5 8.5 l.8 2.2 2.2 .8 -2.2 .8 -.8 2.2 -.8 -2.2 -2.2 -.8 2.2 -.8z" fill="#fff"/></svg>
<svg style="left:0px;top:0px;" width="2558" height="1387" viewBox="0 0 2558 1387"><path d="M941.3 483.8 C927.7 515.4 945.5 551.7 978.8 560.3 C992.4 528.7 974.6 492.4 941.3 483.8 Z" fill="#98b256"/><path d="M1068.0 594.5 C1054.7 625.3 1072.1 660.6 1104.7 669.0 C1118.0 638.2 1100.6 602.9 1068.0 594.5 Z" fill="#98b256"/><path d="M980.1 696.7 C966.5 728.3 984.3 764.6 1017.6 773.2 C1031.2 741.6 1013.4 705.3 980.1 696.7 Z" fill="#98b256"/><defs><radialGradient id="pga" cx="50%" cy="14%" r="92%"><stop offset="0" stop-color="#e6ea4a"/><stop offset=".42" stop-color="#b2d03c"/><stop offset=".72" stop-color="#62b436"/><stop offset="1" stop-color="#2f9d3a"/></radialGradient><linearGradient id="pra" x1="0" y1="0" x2="0" y2="1"><stop offset="0" stop-color="#f7f7f9"/><stop offset="1" stop-color="#dfdfe3"/></linearGradient><linearGradient id="pta" x1="0" y1="0" x2="1" y2="0"><stop offset="0" stop-color="#0c0c0c"/><stop offset="1" stop-color="#4a4f58"/></linearGradient></defs><circle cx="1244.9" cy="404.9" r="35.8" fill="url(#pra)" stroke="#bfbfc6" stroke-width="1.25"/><circle cx="1244.9" cy="404.9" r="25.67" fill="url(#pga)" stroke="#4f8f26" stroke-width="1.79"/><path d="M1235.84 392.87 L1257.93 404.90 L1235.84 416.93 Z" fill="url(#pta)"/><rect x="1063.5" y="594.5" width="46" height="74" fill="none" stroke="#5a80cc" stroke-width="1"/><rect x="1059.5" y="590.5" width="7" height="7" fill="#fff" stroke="#5a80cc" stroke-width="1"/><rect x="1059.5" y="627.5" width="7" height="7" fill="#fff" stroke="#5a80cc" stroke-width="1"/><rect x="1059.5" y="664.5" width="7" height="7" fill="#fff" stroke="#5a80cc" stroke-width="1"/><rect x="1082.5" y="590.5" width="7" height="7" fill="#fff" stroke="#5a80cc" stroke-width="1"/><rect x="1082.5" y="664.5" width="7" height="7" fill="#fff" stroke="#5a80cc" stroke-width="1"/><rect x="1105.5" y="590.5" width="7" height="7" fill="#fff" stroke="#5a80cc" stroke-width="1"/><rect x="1105.5" y="627.5" width="7" height="7" fill="#fff" stroke="#5a80cc" stroke-width="1"/><rect x="1105.5" y="664.5" width="7" height="7" fill="#fff" stroke="#5a80cc" stroke-width="1"/><path d="M1082.5 631.5 H1090.5 M1086.5 627.5 V635.5" stroke="#fff" stroke-width="3"/><path d="M1083 631.5 H1090 M1086.5 628 V635" stroke="#000" stroke-width="1"/></svg>
<div style="left:2012px;top:173px;width:28px;height:1180px;background:#4a4a4a;"></div>
<svg style="left:2019px;top:183px;" width="16" height="10" viewBox="0 0 16 10"><path d="M1.5 8.5 L8 2 L14.5 8.5" fill="none" stroke="#b4b4b4" stroke-width="1.8"/></svg>
<svg style="left:2019px;top:1332px;" width="16" height="10" viewBox="0 0 16 10"><path d="M1.5 1.5 L8 8 L14.5 1.5" fill="none" stroke="#b4b4b4" stroke-width="1.8"/></svg>
<div style="left:2013.5px;top:736.5px;width:26.5px;height:44.0px;background:#606060;border-radius:13px;"></div>
<div style="left:200px;top:1309px;width:1812px;height:44px;background:#535353;"></div>
<svg style="left:209px;top:1319px;" width="25" height="25" viewBox="0 0 25 25"><circle cx="12.5" cy="12.5" r="12.5" fill="#c8c8c8"/></svg>
<span class="t" style="left:216.6px;top:1321.92px;font-size:19px;color:#535353;font-weight:700;">?</span>
<span class="t" style="left:252.5px;top:1323.19px;font-size:17.5px;color:#d2d2d2;font-weight:700;letter-spacing:0.181px;">Cliquez</span>
<span class="t" style="left:321.5px;top:1323.19px;font-size:17.5px;color:#c4c4c4;letter-spacing:0.011px;">sur l’objet à sélectionner</span>
<span class="t" style="left:524px;top:1323.19px;font-size:17.5px;color:#c4c4c4;">|</span>
<span class="t" style="left:539.5px;top:1323.19px;font-size:17.5px;color:#d2d2d2;font-weight:700;letter-spacing:0.816px;">Maj+cliquez</span>
<span class="t" style="left:652.8px;top:1323.19px;font-size:17.5px;color:#c4c4c4;letter-spacing:-0.030px;">pour sélectionner plusieurs objets</span>
<span class="t" style="left:925px;top:1323.19px;font-size:17.5px;color:#c4c4c4;">|</span>
<span class="t" style="left:940.5px;top:1323.19px;font-size:17.5px;color:#d2d2d2;font-weight:700;letter-spacing:0.553px;">Alt+faites glisser</span>
<span class="t" style="left:1096.6px;top:1323.19px;font-size:17.5px;color:#c4c4c4;letter-spacing:0.090px;">l’objet à dupliquer</span>
<div style="left:200px;top:1353px;width:1840px;height:29px;background:#535353;"></div>
<div style="left:205px;top:1354px;width:122px;height:30px;background:#464646;border:1px solid #5d5d5d;border-bottom:none;border-radius:3px 3px 0 0;"></div>
<div style="left:294px;top:1355px;width:32px;height:29px;background:#505050;"></div>
<div style="left:294px;top:1355px;width:1px;height:29px;background:#5d5d5d;"></div>
<svg style="left:303.5px;top:1367.5px;" width="14" height="9" viewBox="0 0 14 9"><path d="M1 1.2 L7 7.2 L13 1.2" fill="none" stroke="#f0f0f0" stroke-width="1.8"/></svg>
<span class="t" style="left:211.5px;top:1364.04px;font-size:17.2px;color:#f2f2f2;letter-spacing:0.758px;">100%</span>
<div style="left:333px;top:1354px;width:122px;height:30px;background:#464646;border:1px solid #5d5d5d;border-bottom:none;border-radius:3px 3px 0 0;"></div>
<div style="left:422px;top:1355px;width:32px;height:29px;background:#505050;"></div>
<div style="left:422px;top:1355px;width:1px;height:29px;background:#5d5d5d;"></div>
<svg style="left:431.5px;top:1367.5px;" width="14" height="9" viewBox="0 0 14 9"><path d="M1 1.2 L7 7.2 L13 1.2" fill="none" stroke="#f0f0f0" stroke-width="1.8"/></svg>
<span class="t" style="left:339px;top:1364.04px;font-size:17.2px;color:#f2f2f2;letter-spacing:1.531px;">0°</span>
<div style="left:526px;top:1354px;width:103px;height:30px;background:#464646;border:1px solid #5d5d5d;border-bottom:none;border-radius:3px 3px 0 0;"></div>
<div style="left:597px;top:1355px;width:31px;height:29px;background:#505050;"></div>
<div style="left:597px;top:1355px;width:1px;height:29px;background:#5d5d5d;"></div>
<svg style="left:606.0px;top:1367.5px;" width="14" height="9" viewBox="0 0 14 9"><path d="M1 1.2 L7 7.2 L13 1.2" fill="none" stroke="#f0f0f0" stroke-width="1.8"/></svg>
<span class="t" style="left:531px;top:1364.04px;font-size:17.2px;color:#f2f2f2;">1</span>
<svg style="left:469px;top:1362.5px;" width="16" height="13" viewBox="0 0 16 13"><rect x="0" y="0" width="2.6" height="13" fill="#7a7a7a"/><path d="M15 0 V13 L5 6.5 Z" fill="#7a7a7a"/></svg>
<svg style="left:500px;top:1362.5px;" width="11" height="13" viewBox="0 0 11 13"><path d="M10.5 0 V13 L0.5 6.5 Z" fill="#7a7a7a"/></svg>
<svg style="left:646px;top:1362.5px;" width="11" height="13" viewBox="0 0 11 13"><path d="M0.5 0 V13 L10.5 6.5 Z" fill="#7a7a7a"/></svg>
<svg style="left:671px;top:1362.5px;" width="16" height="13" viewBox="0 0 16 13"><rect x="13.4" y="0" width="2.6" height="13" fill="#7a7a7a"/><path d="M1 0 V13 L11 6.5 Z" fill="#7a7a7a"/></svg>
<div style="left:703px;top:1355px;width:1px;height:27px;background:#474747;"></div>
<span class="t" style="left:843px;top:1361.69px;font-size:17.5px;color:#cdcdcd;letter-spacing:-0.367px;">Sélection</span>
<div style="left:1054px;top:1355px;width:1px;height:27px;background:#474747;"></div>
<svg style="left:1064px;top:1362.5px;" width="11" height="13" viewBox="0 0 11 13"><path d="M0.5 0 V13 L10.5 6.5 Z" fill="#e4e4e4"/></svg>
<div style="left:1085px;top:1353px;width:927px;height:29px;background:#4a4a4a;"></div>
<svg style="left:1094px;top:1360px;" width="9" height="14" viewBox="0 0 9 14"><path d="M7.5 1 L1.5 7 L7.5 13" fill="none" stroke="#b4b4b4" stroke-width="1.7"/></svg>
<svg style="left:1992px;top:1360px;" width="9" height="14" viewBox="0 0 9 14"><path d="M1.5 1 L7.5 7 L1.5 13" fill="none" stroke="#b4b4b4" stroke-width="1.7"/></svg>
<div style="left:1527px;top:1355px;width:46px;height:26px;background:#636363;border-radius:13px;"></div>
<div style="left:200px;top:1382px;width:2346px;height:1px;background:#2c2c2c;"></div>
<div style="left:1555.5px;top:253.5px;width:423.0px;height:283.5px;background:#383838;border-radius:6px 6px 0 0;box-shadow:0 2px 7px rgba(0,0,0,.28);"></div>
<div style="left:1556.5px;top:254.5px;width:421.0px;height:23.5px;background:#424242;border-radius:5px 5px 0 0;"></div>
<div style="left:1556.5px;top:279px;width:421.0px;height:46px;background:#424242;"></div>
<div style="left:1556.5px;top:279px;width:111.0px;height:47px;background:#535353;"></div>
<div style="left:1556.5px;top:326px;width:421.0px;height:196.29999999999995px;background:#535353;"></div>
<div style="left:1556.5px;top:524.8px;width:421.0px;height:11.200000000000045px;background:#505050;"></div>
<svg style="left:1924.5px;top:262.5px;" width="14" height="9" viewBox="0 0 14 9"><path d="M5.2 0.5 L1 4.5 L5.2 8.5 M12.2 0.5 L8 4.5 L12.2 8.5" fill="none" stroke="#d0d0d0" stroke-width="1.4"/></svg>
<svg style="left:1956.5px;top:262px;" width="12" height="12" viewBox="0 0 12 12"><path d="M1 1 L11 11 M11 1 L1 11" stroke="#d4d4d4" stroke-width="1.7"/></svg>
<span class="t" style="left:1573px;top:293.08px;font-size:16.8px;color:#f0f0f0;font-weight:700;letter-spacing:-0.160px;">Symboles</span>
<svg style="left:1949px;top:296px;" width="18" height="13" viewBox="0 0 18 13"><path d="M0 1 H18 M0 6.5 H18 M0 12 H18" stroke="#c8c8c8" stroke-width="1.7"/></svg>
<div style="left:1565.5px;top:336.5px;width:401.0px;height:151.0px;border:1px solid #5c5c5c;"></div>
<svg style="left:1566.8px;top:337.8px;overflow:hidden;" width="345" height="149.2" viewBox="0 0 345 149.2"><rect x="0.00" y="0.00" width="56" height="56" fill="#e2e2e2"/><rect x="57.67" y="0.00" width="56" height="56" fill="#e2e2e2"/><rect x="115.34" y="0.00" width="56" height="56" fill="#e2e2e2"/><rect x="173.01" y="0.00" width="56" height="56" fill="#e2e2e2"/><rect x="230.68" y="0.00" width="56" height="56" fill="#e2e2e2"/><rect x="288.35" y="0.00" width="56" height="56" fill="#e2e2e2"/><rect x="0.00" y="57.67" width="56" height="56" fill="#e2e2e2"/><rect x="57.67" y="57.67" width="56" height="56" fill="#e2e2e2"/><rect x="115.34" y="57.67" width="56" height="56" fill="#e2e2e2"/><rect x="173.01" y="57.67" width="56" height="56" fill="#e2e2e2"/><rect x="230.68" y="57.67" width="56" height="56" fill="#e2e2e2"/><rect x="288.35" y="57.67" width="56" height="56" fill="#e2e2e2"/><rect x="0.00" y="115.34" width="56" height="56" fill="#e2e2e2"/><rect x="57.67" y="115.34" width="56" height="56" fill="#e2e2e2"/><defs><linearGradient id="s1" x1="0" y1="0" x2="0" y2="1"><stop offset="0" stop-color="#c6e9fb"/><stop offset=".46" stop-color="#6c9cda"/><stop offset=".52" stop-color="#4565bb"/><stop offset="1" stop-color="#5e8ed4"/></linearGradient><radialGradient id="s1b" cx="50%" cy="55%" r="60%"><stop offset="0" stop-color="#2a3fa0" stop-opacity=".75"/><stop offset="1" stop-color="#2a3fa8" stop-opacity="0"/></radialGradient></defs><rect x="3.5" y="16.0" width="49.5" height="25" rx="1" fill="url(#s1)" stroke="#86a8d8" stroke-width=".6"/><rect x="8.0" y="25.0" width="40" height="11" fill="url(#s1b)"/><circle cx="88.67" cy="24.0" r="10.5" fill="#000"/><circle cx="81.67" cy="27.0" r="7" fill="#000"/><circle cx="91.67" cy="33.0" r="6" fill="#000"/><circle cx="87.67" cy="41.0" r="6.5" fill="#000"/><circle cx="71.67" cy="43.0" r="3.6" fill="#000"/><circle cx="68.67" cy="24.0" r="2.8" fill="#000"/><circle cx="84.67" cy="7.0" r="2.6" fill="#000"/><circle cx="102.67" cy="12.0" r="2.6" fill="#000"/><circle cx="99.67" cy="20.0" r="2.2" fill="#000"/><circle cx="77.67" cy="20.0" r="4" fill="#000"/><circle cx="93.67" cy="17.0" r="3" fill="#000"/><circle cx="97.67" cy="31.0" r="2" fill="#000"/><circle cx="65.67" cy="49.0" r="1" fill="#000"/><circle cx="79.67" cy="35.0" r="3" fill="#000"/><circle cx="104.67" cy="5.0" r="1" fill="#000"/><circle cx="74.67" cy="33.0" r="2" fill="#000"/><circle cx="95.67" cy="45.0" r="1.6" fill="#000"/><path d="M84.67 9.0 L86.67 16.0 M101.67 13.0 L94.67 20.0 M70.67 25.0 L79.67 25.0 M73.67 42.0 L82.67 38.0 M87.67 34.0 L87.67 40.0" stroke="#000" stroke-width="2.4" stroke-linecap="round"/><defs><linearGradient id="s3" x1="0" y1="0" x2="0" y2="1"><stop offset="0" stop-color="#f6c79a"/><stop offset=".48" stop-color="#f0a560"/><stop offset=".52" stop-color="#e67c17"/><stop offset="1" stop-color="#ea8a20"/></linearGradient></defs><circle cx="143.34" cy="28.0" r="24.5" fill="#f2a03c"/><circle cx="143.34" cy="28.0" r="19.5" fill="url(#s3)" stroke="#fbe3c8" stroke-width="1.2"/><path d="M186.01 8.0 H205.01" stroke="#333" stroke-width="2.2"/><path d="M205.01 8.0 H213.01" stroke="#bbb" stroke-width="1.6"/><path d="M181.51 14.0 V29.0" stroke="#333" stroke-width="2.2"/><path d="M179.01 8.0 H183.01 M181.01 6.0 V10.0" stroke="#444" stroke-width=".8"/><path d="M185.01 5.0 h6" stroke="#999" stroke-width=".6"/><path d="M219.01 8.0 H223.01 M221.01 6.0 V10.0" stroke="#444" stroke-width=".8"/><path d="M211.01 5.0 h6" stroke="#999" stroke-width=".6"/><path d="M179.01 48.0 H183.01 M181.01 46.0 V50.0" stroke="#444" stroke-width=".8"/><path d="M185.01 51.0 h6" stroke="#999" stroke-width=".6"/><path d="M219.01 48.0 H223.01 M221.01 46.0 V50.0" stroke="#444" stroke-width=".8"/><path d="M211.01 51.0 h6" stroke="#999" stroke-width=".6"/><ellipse cx="258.68" cy="28.0" rx="24" ry="13" transform="rotate(0 258.68 28.0)" fill="none" stroke="#6f6f6f" stroke-width="2.2" opacity=".55"/><ellipse cx="258.68" cy="28.0" rx="24" ry="13" transform="rotate(40 258.68 28.0)" fill="none" stroke="#6f6f6f" stroke-width="2.2" opacity=".55"/><ellipse cx="258.68" cy="28.0" rx="24" ry="13" transform="rotate(80 258.68 28.0)" fill="none" stroke="#6f6f6f" stroke-width="2.2" opacity=".55"/><ellipse cx="258.68" cy="28.0" rx="24" ry="13" transform="rotate(120 258.68 28.0)" fill="none" stroke="#6f6f6f" stroke-width="2.2" opacity=".55"/><ellipse cx="258.68" cy="28.0" rx="24" ry="13" transform="rotate(160 258.68 28.0)" fill="none" stroke="#6f6f6f" stroke-width="2.2" opacity=".55"/><ellipse cx="258.68" cy="28.0" rx="24" ry="13" transform="rotate(200 258.68 28.0)" fill="none" stroke="#6f6f6f" stroke-width="2.2" opacity=".55"/><ellipse cx="258.68" cy="28.0" rx="24" ry="13" transform="rotate(240 258.68 28.0)" fill="none" stroke="#6f6f6f" stroke-width="2.2" opacity=".55"/><ellipse cx="258.68" cy="28.0" rx="24" ry="13" transform="rotate(280 258.68 28.0)" fill="none" stroke="#6f6f6f" stroke-width="2.2" opacity=".55"/><ellipse cx="258.68" cy="28.0" rx="24" ry="13" transform="rotate(320 258.68 28.0)" fill="none" stroke="#6f6f6f" stroke-width="2.2" opacity=".55"/><path d="M258.68 13.5 l10.2 4.3 4.3 10.2 -4.3 10.2 -10.2 4.3 -10.2 -4.3 -4.3 -10.2 4.3 -10.2z" fill="#e2e2e2"/><path d="M317.05 29.4 l-2.6 -8 l-1.2 -11 l3.8 -5.2 l3.8 5.2 l-1.2 11 z" transform="rotate(4.0 317.05 29.4)" fill="#f38b7d"/><path d="M317.05 29.4 l-2.6 -8 l-1.2 -11 l3.8 -5.2 l3.8 5.2 l-1.2 11 z" transform="rotate(20.4 317.05 29.4)" fill="#ec6b60"/><path d="M317.05 29.4 l-2.6 -8 l-1.2 -11 l3.8 -5.2 l3.8 5.2 l-1.2 11 z" transform="rotate(36.7 317.05 29.4)" fill="#f38b7d"/><path d="M317.05 29.4 l-2.6 -8 l-1.2 -11 l3.8 -5.2 l3.8 5.2 l-1.2 11 z" transform="rotate(53.1 317.05 29.4)" fill="#ec6b60"/><path d="M317.05 29.4 l-2.6 -8 l-1.2 -11 l3.8 -5.2 l3.8 5.2 l-1.2 11 z" transform="rotate(69.4 317.05 29.4)" fill="#f38b7d"/><path d="M317.05 29.4 l-2.6 -8 l-1.2 -11 l3.8 -5.2 l3.8 5.2 l-1.2 11 z" transform="rotate(85.8 317.05 29.4)" fill="#ec6b60"/><path d="M317.05 29.4 l-2.6 -8 l-1.2 -11 l3.8 -5.2 l3.8 5.2 l-1.2 11 z" transform="rotate(102.2 317.05 29.4)" fill="#f38b7d"/><path d="M317.05 29.4 l-2.6 -8 l-1.2 -11 l3.8 -5.2 l3.8 5.2 l-1.2 11 z" transform="rotate(118.5 317.05 29.4)" fill="#ec6b60"/><path d="M317.05 29.4 l-2.6 -8 l-1.2 -11 l3.8 -5.2 l3.8 5.2 l-1.2 11 z" transform="rotate(134.9 317.05 29.4)" fill="#f38b7d"/><path d="M317.05 29.4 l-2.6 -8 l-1.2 -11 l3.8 -5.2 l3.8 5.2 l-1.2 11 z" transform="rotate(151.2 317.05 29.4)" fill="#ec6b60"/><path d="M317.05 29.4 l-2.6 -8 l-1.2 -11 l3.8 -5.2 l3.8 5.2 l-1.2 11 z" transform="rotate(167.6 317.05 29.4)" fill="#f38b7d"/><path d="M317.05 29.4 l-2.6 -8 l-1.2 -11 l3.8 -5.2 l3.8 5.2 l-1.2 11 z" transform="rotate(184.0 317.05 29.4)" fill="#ec6b60"/><path d="M317.05 29.4 l-2.6 -8 l-1.2 -11 l3.8 -5.2 l3.8 5.2 l-1.2 11 z" transform="rotate(200.3 317.05 29.4)" fill="#f38b7d"/><path d="M317.05 29.4 l-2.6 -8 l-1.2 -11 l3.8 -5.2 l3.8 5.2 l-1.2 11 z" transform="rotate(216.7 317.05 29.4)" fill="#ec6b60"/><path d="M317.05 29.4 l-2.6 -8 l-1.2 -11 l3.8 -5.2 l3.8 5.2 l-1.2 11 z" transform="rotate(233.0 317.05 29.4)" fill="#f38b7d"/><path d="M317.05 29.4 l-2.6 -8 l-1.2 -11 l3.8 -5.2 l3.8 5.2 l-1.2 11 z" transform="rotate(249.4 317.05 29.4)" fill="#ec6b60"/><path d="M317.05 29.4 l-2.6 -8 l-1.2 -11 l3.8 -5.2 l3.8 5.2 l-1.2 11 z" transform="rotate(265.8 317.05 29.4)" fill="#f38b7d"/><path d="M317.05 29.4 l-2.6 -8 l-1.2 -11 l3.8 -5.2 l3.8 5.2 l-1.2 11 z" transform="rotate(282.1 317.05 29.4)" fill="#ec6b60"/><path d="M317.05 29.4 l-2.6 -8 l-1.2 -11 l3.8 -5.2 l3.8 5.2 l-1.2 11 z" transform="rotate(298.5 317.05 29.4)" fill="#f38b7d"/><path d="M317.05 29.4 l-2.6 -8 l-1.2 -11 l3.8 -5.2 l3.8 5.2 l-1.2 11 z" transform="rotate(314.8 317.05 29.4)" fill="#ec6b60"/><path d="M317.05 29.4 l-2.6 -8 l-1.2 -11 l3.8 -5.2 l3.8 5.2 l-1.2 11 z" transform="rotate(331.2 317.05 29.4)" fill="#f38b7d"/><path d="M317.05 29.4 l-2.6 -8 l-1.2 -11 l3.8 -5.2 l3.8 5.2 l-1.2 11 z" transform="rotate(347.6 317.05 29.4)" fill="#ec6b60"/><circle cx="317.05" cy="29.4" r="7.6" fill="#c29b28"/><circle cx="317.05" cy="29.2" r="5.6" fill="#e3cc60"/><path d="M1.1 59.27 H54.9 V106.87 H48.6 V113.07 H1.1 Z" fill="#e6e6e6" stroke="#000" stroke-width="1.3"/><path d="M16.0 62.4 C7.3 82.4 18.7 105.3 40.0 110.8 C48.7 90.8 37.3 67.8 16.0 62.4 Z" fill="#98b256"/><rect x="49.3" y="107.57" width="6.7" height="6.7" fill="#f2f2f2"/><path d="M49.8 110.87 h5.4 M52.5 108.17 v5.4" stroke="#000" stroke-width="1.1"/><defs><radialGradient id="pgb" cx="50%" cy="14%" r="92%"><stop offset="0" stop-color="#e6ea4a"/><stop offset=".42" stop-color="#b2d03c"/><stop offset=".72" stop-color="#62b436"/><stop offset="1" stop-color="#2f9d3a"/></radialGradient><linearGradient id="prb" x1="0" y1="0" x2="0" y2="1"><stop offset="0" stop-color="#f7f7f9"/><stop offset="1" stop-color="#dfdfe3"/></linearGradient><linearGradient id="ptb" x1="0" y1="0" x2="1" y2="0"><stop offset="0" stop-color="#0c0c0c"/><stop offset="1" stop-color="#4a4f58"/></linearGradient></defs><circle cx="85.67" cy="85.67" r="24" fill="url(#prb)" stroke="#bfbfc6" stroke-width="0.84"/><circle cx="85.67" cy="85.67" r="17.21" fill="url(#pgb)" stroke="#4f8f26" stroke-width="1.20"/><path d="M79.60 77.61 L94.41 85.67 L79.60 93.73 Z" fill="url(#ptb)"/><rect x="129.34" y="69.67" width="27" height="27" fill="#a79ad8" stroke="#d8d080" stroke-width="1.2" stroke-dasharray="1 1.4"/><g transform="rotate(24 144.34 81.67)"><rect x="138.34" y="68.67" width="11" height="26" rx="2.5" fill="#f4f4f4" stroke="#222" stroke-width="1.1"/><rect x="139.84" y="75.67" width="8" height="8" fill="#7aa05a" stroke="#333" stroke-width=".6"/><rect x="139.34" y="67.67" width="9" height="5" rx="1.5" fill="#f08a1c" stroke="#333" stroke-width=".7"/><path d="M140.34 86.67 h7 M140.34 89.17 h7 M140.34 91.67 h7" stroke="#444" stroke-width=".8"/></g><path d="M153.34 66.67 l3 -4 M155.34 68.67 l5 -2 M151.34 65.67 l0 -4" stroke="#e81e3c" stroke-width="1"/><circle cx="125.9" cy="83.0" r=".6" fill="#7ab8d8"/><circle cx="149.0" cy="99.2" r=".6" fill="#7ab8d8"/><circle cx="127.6" cy="87.7" r=".6" fill="#7ab8d8"/><circle cx="134.7" cy="102.7" r=".6" fill="#7ab8d8"/><circle cx="123.6" cy="89.2" r=".6" fill="#7ab8d8"/><circle cx="135.0" cy="99.4" r=".6" fill="#7ab8d8"/><circle cx="126.7" cy="97.9" r=".6" fill="#7ab8d8"/><circle cx="136.3" cy="100.5" r=".6" fill="#7ab8d8"/><circle cx="128.4" cy="100.5" r=".6" fill="#7ab8d8"/><circle cx="147.2" cy="101.8" r=".6" fill="#7ab8d8"/><circle cx="131.2" cy="80.7" r=".6" fill="#7ab8d8"/><circle cx="153.9" cy="101.0" r=".6" fill="#7ab8d8"/><circle cx="124.5" cy="82.3" r=".6" fill="#7ab8d8"/><circle cx="140.7" cy="105.2" r=".6" fill="#7ab8d8"/><circle cx="124.8" cy="92.5" r=".6" fill="#7ab8d8"/><circle cx="148.7" cy="101.6" r=".6" fill="#7ab8d8"/><circle cx="127.7" cy="81.1" r=".6" fill="#7ab8d8"/><circle cx="134.8" cy="100.3" r=".6" fill="#7ab8d8"/><circle cx="128.8" cy="89.1" r=".6" fill="#7ab8d8"/><circle cx="140.9" cy="103.4" r=".6" fill="#7ab8d8"/><circle cx="127.0" cy="86.3" r=".6" fill="#7ab8d8"/><circle cx="152.4" cy="104.3" r=".6" fill="#7ab8d8"/><circle cx="125.3" cy="92.3" r=".6" fill="#7ab8d8"/><circle cx="145.9" cy="105.7" r=".6" fill="#7ab8d8"/><circle cx="129.2" cy="86.0" r=".6" fill="#7ab8d8"/><circle cx="156.9" cy="99.6" r=".6" fill="#7ab8d8"/><circle cx="126.7" cy="96.3" r=".6" fill="#7ab8d8"/><circle cx="137.0" cy="102.6" r=".6" fill="#7ab8d8"/><defs><clipPath id="c10"><circle cx="201.01" cy="86.17" r="24"/></clipPath></defs><g clip-path="url(#c10)"><rect x="177.26" y="61.42" width="0.50" height="0.50" fill="#111"/><rect x="179.76" y="61.42" width="0.50" height="0.50" fill="#111"/><rect x="182.26" y="61.42" width="0.50" height="0.50" fill="#111"/><rect x="184.76" y="61.42" width="0.50" height="0.50" fill="#111"/><rect x="187.26" y="61.42" width="0.50" height="0.50" fill="#111"/><rect x="189.76" y="61.42" width="0.50" height="0.50" fill="#111"/><rect x="192.26" y="61.42" width="0.50" height="0.50" fill="#111"/><rect x="194.76" y="61.42" width="0.50" height="0.50" fill="#111"/><rect x="197.26" y="61.42" width="0.50" height="0.50" fill="#111"/><rect x="199.76" y="61.42" width="0.50" height="0.50" fill="#111"/><rect x="202.26" y="61.42" width="0.50" height="0.50" fill="#111"/><rect x="204.76" y="61.42" width="0.50" height="0.50" fill="#111"/><rect x="207.26" y="61.42" width="0.50" height="0.50" fill="#111"/><rect x="209.76" y="61.42" width="0.50" height="0.50" fill="#111"/><rect x="212.26" y="61.42" width="0.50" height="0.50" fill="#111"/><rect x="214.76" y="61.42" width="0.50" height="0.50" fill="#111"/><rect x="217.26" y="61.42" width="0.50" height="0.50" fill="#111"/><rect x="219.76" y="61.42" width="0.50" height="0.50" fill="#111"/><rect x="222.26" y="61.42" width="0.50" height="0.50" fill="#111"/><rect x="224.76" y="61.42" width="0.50" height="0.50" fill="#111"/><rect x="177.20" y="63.91" width="0.62" height="0.62" fill="#111"/><rect x="179.70" y="63.91" width="0.62" height="0.62" fill="#111"/><rect x="182.20" y="63.91" width="0.62" height="0.62" fill="#111"/><rect x="184.70" y="63.91" width="0.62" height="0.62" fill="#111"/><rect x="187.20" y="63.91" width="0.62" height="0.62" fill="#111"/><rect x="189.70" y="63.91" width="0.62" height="0.62" fill="#111"/><rect x="192.20" y="63.91" width="0.62" height="0.62" fill="#111"/><rect x="194.70" y="63.91" width="0.62" height="0.62" fill="#111"/><rect x="197.20" y="63.91" width="0.62" height="0.62" fill="#111"/><rect x="199.70" y="63.91" width="0.62" height="0.62" fill="#111"/><rect x="202.20" y="63.91" width="0.62" height="0.62" fill="#111"/><rect x="204.70" y="63.91" width="0.62" height="0.62" fill="#111"/><rect x="207.20" y="63.91" width="0.62" height="0.62" fill="#111"/><rect x="209.70" y="63.91" width="0.62" height="0.62" fill="#111"/><rect x="212.20" y="63.91" width="0.62" height="0.62" fill="#111"/><rect x="214.70" y="63.91" width="0.62" height="0.62" fill="#111"/><rect x="217.20" y="63.91" width="0.62" height="0.62" fill="#111"/><rect x="219.70" y="63.91" width="0.62" height="0.62" fill="#111"/><rect x="222.20" y="63.91" width="0.62" height="0.62" fill="#111"/><rect x="224.70" y="63.91" width="0.62" height="0.62" fill="#111"/><rect x="177.14" y="66.40" width="0.74" height="0.74" fill="#111"/><rect x="179.64" y="66.40" width="0.74" height="0.74" fill="#111"/><rect x="182.14" y="66.40" width="0.74" height="0.74" fill="#111"/><rect x="184.64" y="66.40" width="0.74" height="0.74" fill="#111"/><rect x="187.14" y="66.40" width="0.74" height="0.74" fill="#111"/><rect x="189.64" y="66.40" width="0.74" height="0.74" fill="#111"/><rect x="192.14" y="66.40" width="0.74" height="0.74" fill="#111"/><rect x="194.64" y="66.40" width="0.74" height="0.74" fill="#111"/><rect x="197.14" y="66.40" width="0.74" height="0.74" fill="#111"/><rect x="199.64" y="66.40" width="0.74" height="0.74" fill="#111"/><rect x="202.14" y="66.40" width="0.74" height="0.74" fill="#111"/><rect x="204.64" y="66.40" width="0.74" height="0.74" fill="#111"/><rect x="207.14" y="66.40" width="0.74" height="0.74" fill="#111"/><rect x="209.64" y="66.40" width="0.74" height="0.74" fill="#111"/><rect x="212.14" y="66.40" width="0.74" height="0.74" fill="#111"/><rect x="214.64" y="66.40" width="0.74" height="0.74" fill="#111"/><rect x="217.14" y="66.40" width="0.74" height="0.74" fill="#111"/><rect x="219.64" y="66.40" width="0.74" height="0.74" fill="#111"/><rect x="222.14" y="66.40" width="0.74" height="0.74" fill="#111"/><rect x="224.64" y="66.40" width="0.74" height="0.74" fill="#111"/><rect x="177.08" y="68.89" width="0.86" height="0.86" fill="#111"/><rect x="179.58" y="68.89" width="0.86" height="0.86" fill="#111"/><rect x="182.08" y="68.89" width="0.86" height="0.86" fill="#111"/><rect x="184.58" y="68.89" width="0.86" height="0.86" fill="#111"/><rect x="187.08" y="68.89" width="0.86" height="0.86" fill="#111"/><rect x="189.58" y="68.89" width="0.86" height="0.86" fill="#111"/><rect x="192.08" y="68.89" width="0.86" height="0.86" fill="#111"/><rect x="194.58" y="68.89" width="0.86" height="0.86" fill="#111"/><rect x="197.08" y="68.89" width="0.86" height="0.86" fill="#111"/><rect x="199.58" y="68.89" width="0.86" height="0.86" fill="#111"/><rect x="202.08" y="68.89" width="0.86" height="0.86" fill="#111"/><rect x="204.58" y="68.89" width="0.86" height="0.86" fill="#111"/><rect x="207.08" y="68.89" width="0.86" height="0.86" fill="#111"/><rect x="209.58" y="68.89" width="0.86" height="0.86" fill="#111"/><rect x="212.08" y="68.89" width="0.86" height="0.86" fill="#111"/><rect x="214.58" y="68.89" width="0.86" height="0.86" fill="#111"/><rect x="217.08" y="68.89" width="0.86" height="0.86" fill="#111"/><rect x="219.58" y="68.89" width="0.86" height="0.86" fill="#111"/><rect x="222.08" y="68.89" width="0.86" height="0.86" fill="#111"/><rect x="224.58" y="68.89" width="0.86" height="0.86" fill="#111"/><rect x="177.02" y="71.38" width="0.98" height="0.98" fill="#111"/><rect x="179.52" y="71.38" width="0.98" height="0.98" fill="#111"/><rect x="182.02" y="71.38" width="0.98" height="0.98" fill="#111"/><rect x="184.52" y="71.38" width="0.98" height="0.98" fill="#111"/><rect x="187.02" y="71.38" width="0.98" height="0.98" fill="#111"/><rect x="189.52" y="71.38" width="0.98" height="0.98" fill="#111"/><rect x="192.02" y="71.38" width="0.98" height="0.98" fill="#111"/><rect x="194.52" y="71.38" width="0.98" height="0.98" fill="#111"/><rect x="197.02" y="71.38" width="0.98" height="0.98" fill="#111"/><rect x="199.52" y="71.38" width="0.98" height="0.98" fill="#111"/><rect x="202.02" y="71.38" width="0.98" height="0.98" fill="#111"/><rect x="204.52" y="71.38" width="0.98" height="0.98" fill="#111"/><rect x="207.02" y="71.38" width="0.98" height="0.98" fill="#111"/><rect x="209.52" y="71.38" width="0.98" height="0.98" fill="#111"/><rect x="212.02" y="71.38" width="0.98" height="0.98" fill="#111"/><rect x="214.52" y="71.38" width="0.98" height="0.98" fill="#111"/><rect x="217.02" y="71.38" width="0.98" height="0.98" fill="#111"/><rect x="219.52" y="71.38" width="0.98" height="0.98" fill="#111"/><rect x="222.02" y="71.38" width="0.98" height="0.98" fill="#111"/><rect x="224.52" y="71.38" width="0.98" height="0.98" fill="#111"/><rect x="176.96" y="73.87" width="1.11" height="1.11" fill="#111"/><rect x="179.46" y="73.87" width="1.11" height="1.11" fill="#111"/><rect x="181.96" y="73.87" width="1.11" height="1.11" fill="#111"/><rect x="184.46" y="73.87" width="1.11" height="1.11" fill="#111"/><rect x="186.96" y="73.87" width="1.11" height="1.11" fill="#111"/><rect x="189.46" y="73.87" width="1.11" height="1.11" fill="#111"/><rect x="191.96" y="73.87" width="1.11" height="1.11" fill="#111"/><rect x="194.46" y="73.87" width="1.11" height="1.11" fill="#111"/><rect x="196.96" y="73.87" width="1.11" height="1.11" fill="#111"/><rect x="199.46" y="73.87" width="1.11" height="1.11" fill="#111"/><rect x="201.96" y="73.87" width="1.11" height="1.11" fill="#111"/><rect x="204.46" y="73.87" width="1.11" height="1.11" fill="#111"/><rect x="206.96" y="73.87" width="1.11" height="1.11" fill="#111"/><rect x="209.46" y="73.87" width="1.11" height="1.11" fill="#111"/><rect x="211.96" y="73.87" width="1.11" height="1.11" fill="#111"/><rect x="214.46" y="73.87" width="1.11" height="1.11" fill="#111"/><rect x="216.96" y="73.87" width="1.11" height="1.11" fill="#111"/><rect x="219.46" y="73.87" width="1.11" height="1.11" fill="#111"/><rect x="221.96" y="73.87" width="1.11" height="1.11" fill="#111"/><rect x="224.46" y="73.87" width="1.11" height="1.11" fill="#111"/><rect x="176.90" y="76.36" width="1.23" height="1.23" fill="#111"/><rect x="179.40" y="76.36" width="1.23" height="1.23" fill="#111"/><rect x="181.90" y="76.36" width="1.23" height="1.23" fill="#111"/><rect x="184.40" y="76.36" width="1.23" height="1.23" fill="#111"/><rect x="186.90" y="76.36" width="1.23" height="1.23" fill="#111"/><rect x="189.40" y="76.36" width="1.23" height="1.23" fill="#111"/><rect x="191.90" y="76.36" width="1.23" height="1.23" fill="#111"/><rect x="194.40" y="76.36" width="1.23" height="1.23" fill="#111"/><rect x="196.90" y="76.36" width="1.23" height="1.23" fill="#111"/><rect x="199.40" y="76.36" width="1.23" height="1.23" fill="#111"/><rect x="201.90" y="76.36" width="1.23" height="1.23" fill="#111"/><rect x="204.40" y="76.36" width="1.23" height="1.23" fill="#111"/><rect x="206.90" y="76.36" width="1.23" height="1.23" fill="#111"/><rect x="209.40" y="76.36" width="1.23" height="1.23" fill="#111"/><rect x="211.90" y="76.36" width="1.23" height="1.23" fill="#111"/><rect x="214.40" y="76.36" width="1.23" height="1.23" fill="#111"/><rect x="216.90" y="76.36" width="1.23" height="1.23" fill="#111"/><rect x="219.40" y="76.36" width="1.23" height="1.23" fill="#111"/><rect x="221.90" y="76.36" width="1.23" height="1.23" fill="#111"/><rect x="224.40" y="76.36" width="1.23" height="1.23" fill="#111"/><rect x="176.84" y="78.85" width="1.35" height="1.35" fill="#111"/><rect x="179.34" y="78.85" width="1.35" height="1.35" fill="#111"/><rect x="181.84" y="78.85" width="1.35" height="1.35" fill="#111"/><rect x="184.34" y="78.85" width="1.35" height="1.35" fill="#111"/><rect x="186.84" y="78.85" width="1.35" height="1.35" fill="#111"/><rect x="189.34" y="78.85" width="1.35" height="1.35" fill="#111"/><rect x="191.84" y="78.85" width="1.35" height="1.35" fill="#111"/><rect x="194.34" y="78.85" width="1.35" height="1.35" fill="#111"/><rect x="196.84" y="78.85" width="1.35" height="1.35" fill="#111"/><rect x="199.34" y="78.85" width="1.35" height="1.35" fill="#111"/><rect x="201.84" y="78.85" width="1.35" height="1.35" fill="#111"/><rect x="204.34" y="78.85" width="1.35" height="1.35" fill="#111"/><rect x="206.84" y="78.85" width="1.35" height="1.35" fill="#111"/><rect x="209.34" y="78.85" width="1.35" height="1.35" fill="#111"/><rect x="211.84" y="78.85" width="1.35" height="1.35" fill="#111"/><rect x="214.34" y="78.85" width="1.35" height="1.35" fill="#111"/><rect x="216.84" y="78.85" width="1.35" height="1.35" fill="#111"/><rect x="219.34" y="78.85" width="1.35" height="1.35" fill="#111"/><rect x="221.84" y="78.85" width="1.35" height="1.35" fill="#111"/><rect x="224.34" y="78.85" width="1.35" height="1.35" fill="#111"/><rect x="176.78" y="81.34" width="1.47" height="1.47" fill="#111"/><rect x="179.28" y="81.34" width="1.47" height="1.47" fill="#111"/><rect x="181.78" y="81.34" width="1.47" height="1.47" fill="#111"/><rect x="184.28" y="81.34" width="1.47" height="1.47" fill="#111"/><rect x="186.78" y="81.34" width="1.47" height="1.47" fill="#111"/><rect x="189.28" y="81.34" width="1.47" height="1.47" fill="#111"/><rect x="191.78" y="81.34" width="1.47" height="1.47" fill="#111"/><rect x="194.28" y="81.34" width="1.47" height="1.47" fill="#111"/><rect x="196.78" y="81.34" width="1.47" height="1.47" fill="#111"/><rect x="199.28" y="81.34" width="1.47" height="1.47" fill="#111"/><rect x="201.78" y="81.34" width="1.47" height="1.47" fill="#111"/><rect x="204.28" y="81.34" width="1.47" height="1.47" fill="#111"/><rect x="206.78" y="81.34" width="1.47" height="1.47" fill="#111"/><rect x="209.28" y="81.34" width="1.47" height="1.47" fill="#111"/><rect x="211.78" y="81.34" width="1.47" height="1.47" fill="#111"/><rect x="214.28" y="81.34" width="1.47" height="1.47" fill="#111"/><rect x="216.78" y="81.34" width="1.47" height="1.47" fill="#111"/><rect x="219.28" y="81.34" width="1.47" height="1.47" fill="#111"/><rect x="221.78" y="81.34" width="1.47" height="1.47" fill="#111"/><rect x="224.28" y="81.34" width="1.47" height="1.47" fill="#111"/><rect x="176.72" y="83.83" width="1.59" height="1.59" fill="#111"/><rect x="179.22" y="83.83" width="1.59" height="1.59" fill="#111"/><rect x="181.72" y="83.83" width="1.59" height="1.59" fill="#111"/><rect x="184.22" y="83.83" width="1.59" height="1.59" fill="#111"/><rect x="186.72" y="83.83" width="1.59" height="1.59" fill="#111"/><rect x="189.22" y="83.83" width="1.59" height="1.59" fill="#111"/><rect x="191.72" y="83.83" width="1.59" height="1.59" fill="#111"/><rect x="194.22" y="83.83" width="1.59" height="1.59" fill="#111"/><rect x="196.72" y="83.83" width="1.59" height="1.59" fill="#111"/><rect x="199.22" y="83.83" width="1.59" height="1.59" fill="#111"/><rect x="201.72" y="83.83" width="1.59" height="1.59" fill="#111"/><rect x="204.22" y="83.83" width="1.59" height="1.59" fill="#111"/><rect x="206.72" y="83.83" width="1.59" height="1.59" fill="#111"/><rect x="209.22" y="83.83" width="1.59" height="1.59" fill="#111"/><rect x="211.72" y="83.83" width="1.59" height="1.59" fill="#111"/><rect x="214.22" y="83.83" width="1.59" height="1.59" fill="#111"/><rect x="216.72" y="83.83" width="1.59" height="1.59" fill="#111"/><rect x="219.22" y="83.83" width="1.59" height="1.59" fill="#111"/><rect x="221.72" y="83.83" width="1.59" height="1.59" fill="#111"/><rect x="224.22" y="83.83" width="1.59" height="1.59" fill="#111"/><rect x="176.65" y="86.31" width="1.71" height="1.71" fill="#111"/><rect x="179.15" y="86.31" width="1.71" height="1.71" fill="#111"/><rect x="181.65" y="86.31" width="1.71" height="1.71" fill="#111"/><rect x="184.15" y="86.31" width="1.71" height="1.71" fill="#111"/><rect x="186.65" y="86.31" width="1.71" height="1.71" fill="#111"/><rect x="189.15" y="86.31" width="1.71" height="1.71" fill="#111"/><rect x="191.65" y="86.31" width="1.71" height="1.71" fill="#111"/><rect x="194.15" y="86.31" width="1.71" height="1.71" fill="#111"/><rect x="196.65" y="86.31" width="1.71" height="1.71" fill="#111"/><rect x="199.15" y="86.31" width="1.71" height="1.71" fill="#111"/><rect x="201.65" y="86.31" width="1.71" height="1.71" fill="#111"/><rect x="204.15" y="86.31" width="1.71" height="1.71" fill="#111"/><rect x="206.65" y="86.31" width="1.71" height="1.71" fill="#111"/><rect x="209.15" y="86.31" width="1.71" height="1.71" fill="#111"/><rect x="211.65" y="86.31" width="1.71" height="1.71" fill="#111"/><rect x="214.15" y="86.31" width="1.71" height="1.71" fill="#111"/><rect x="216.65" y="86.31" width="1.71" height="1.71" fill="#111"/><rect x="219.15" y="86.31" width="1.71" height="1.71" fill="#111"/><rect x="221.65" y="86.31" width="1.71" height="1.71" fill="#111"/><rect x="224.15" y="86.31" width="1.71" height="1.71" fill="#111"/><rect x="176.59" y="88.80" width="1.83" height="1.83" fill="#111"/><rect x="179.09" y="88.80" width="1.83" height="1.83" fill="#111"/><rect x="181.59" y="88.80" width="1.83" height="1.83" fill="#111"/><rect x="184.09" y="88.80" width="1.83" height="1.83" fill="#111"/><rect x="186.59" y="88.80" width="1.83" height="1.83" fill="#111"/><rect x="189.09" y="88.80" width="1.83" height="1.83" fill="#111"/><rect x="191.59" y="88.80" width="1.83" height="1.83" fill="#111"/><rect x="194.09" y="88.80" width="1.83" height="1.83" fill="#111"/><rect x="196.59" y="88.80" width="1.83" height="1.83" fill="#111"/><rect x="199.09" y="88.80" width="1.83" height="1.83" fill="#111"/><rect x="201.59" y="88.80" width="1.83" height="1.83" fill="#111"/><rect x="204.09" y="88.80" width="1.83" height="1.83" fill="#111"/><rect x="206.59" y="88.80" width="1.83" height="1.83" fill="#111"/><rect x="209.09" y="88.80" width="1.83" height="1.83" fill="#111"/><rect x="211.59" y="88.80" width="1.83" height="1.83" fill="#111"/><rect x="214.09" y="88.80" width="1.83" height="1.83" fill="#111"/><rect x="216.59" y="88.80" width="1.83" height="1.83" fill="#111"/><rect x="219.09" y="88.80" width="1.83" height="1.83" fill="#111"/><rect x="221.59" y="88.80" width="1.83" height="1.83" fill="#111"/><rect x="224.09" y="88.80" width="1.83" height="1.83" fill="#111"/><rect x="176.53" y="91.29" width="1.95" height="1.95" fill="#111"/><rect x="179.03" y="91.29" width="1.95" height="1.95" fill="#111"/><rect x="181.53" y="91.29" width="1.95" height="1.95" fill="#111"/><rect x="184.03" y="91.29" width="1.95" height="1.95" fill="#111"/><rect x="186.53" y="91.29" width="1.95" height="1.95" fill="#111"/><rect x="189.03" y="91.29" width="1.95" height="1.95" fill="#111"/><rect x="191.53" y="91.29" width="1.95" height="1.95" fill="#111"/><rect x="194.03" y="91.29" width="1.95" height="1.95" fill="#111"/><rect x="196.53" y="91.29" width="1.95" height="1.95" fill="#111"/><rect x="199.03" y="91.29" width="1.95" height="1.95" fill="#111"/><rect x="201.53" y="91.29" width="1.95" height="1.95" fill="#111"/><rect x="204.03" y="91.29" width="1.95" height="1.95" fill="#111"/><rect x="206.53" y="91.29" width="1.95" height="1.95" fill="#111"/><rect x="209.03" y="91.29" width="1.95" height="1.95" fill="#111"/><rect x="211.53" y="91.29" width="1.95" height="1.95" fill="#111"/><rect x="214.03" y="91.29" width="1.95" height="1.95" fill="#111"/><rect x="216.53" y="91.29" width="1.95" height="1.95" fill="#111"/><rect x="219.03" y="91.29" width="1.95" height="1.95" fill="#111"/><rect x="221.53" y="91.29" width="1.95" height="1.95" fill="#111"/><rect x="224.03" y="91.29" width="1.95" height="1.95" fill="#111"/><rect x="176.47" y="93.78" width="2.07" height="2.07" fill="#111"/><rect x="178.97" y="93.78" width="2.07" height="2.07" fill="#111"/><rect x="181.47" y="93.78" width="2.07" height="2.07" fill="#111"/><rect x="183.97" y="93.78" width="2.07" height="2.07" fill="#111"/><rect x="186.47" y="93.78" width="2.07" height="2.07" fill="#111"/><rect x="188.97" y="93.78" width="2.07" height="2.07" fill="#111"/><rect x="191.47" y="93.78" width="2.07" height="2.07" fill="#111"/><rect x="193.97" y="93.78" width="2.07" height="2.07" fill="#111"/><rect x="196.47" y="93.78" width="2.07" height="2.07" fill="#111"/><rect x="198.97" y="93.78" width="2.07" height="2.07" fill="#111"/><rect x="201.47" y="93.78" width="2.07" height="2.07" fill="#111"/><rect x="203.97" y="93.78" width="2.07" height="2.07" fill="#111"/><rect x="206.47" y="93.78" width="2.07" height="2.07" fill="#111"/><rect x="208.97" y="93.78" width="2.07" height="2.07" fill="#111"/><rect x="211.47" y="93.78" width="2.07" height="2.07" fill="#111"/><rect x="213.97" y="93.78" width="2.07" height="2.07" fill="#111"/><rect x="216.47" y="93.78" width="2.07" height="2.07" fill="#111"/><rect x="218.97" y="93.78" width="2.07" height="2.07" fill="#111"/><rect x="221.47" y="93.78" width="2.07" height="2.07" fill="#111"/><rect x="223.97" y="93.78" width="2.07" height="2.07" fill="#111"/><rect x="176.41" y="96.27" width="2.19" height="2.19" fill="#111"/><rect x="178.91" y="96.27" width="2.19" height="2.19" fill="#111"/><rect x="181.41" y="96.27" width="2.19" height="2.19" fill="#111"/><rect x="183.91" y="96.27" width="2.19" height="2.19" fill="#111"/><rect x="186.41" y="96.27" width="2.19" height="2.19" fill="#111"/><rect x="188.91" y="96.27" width="2.19" height="2.19" fill="#111"/><rect x="191.41" y="96.27" width="2.19" height="2.19" fill="#111"/><rect x="193.91" y="96.27" width="2.19" height="2.19" fill="#111"/><rect x="196.41" y="96.27" width="2.19" height="2.19" fill="#111"/><rect x="198.91" y="96.27" width="2.19" height="2.19" fill="#111"/><rect x="201.41" y="96.27" width="2.19" height="2.19" fill="#111"/><rect x="203.91" y="96.27" width="2.19" height="2.19" fill="#111"/><rect x="206.41" y="96.27" width="2.19" height="2.19" fill="#111"/><rect x="208.91" y="96.27" width="2.19" height="2.19" fill="#111"/><rect x="211.41" y="96.27" width="2.19" height="2.19" fill="#111"/><rect x="213.91" y="96.27" width="2.19" height="2.19" fill="#111"/><rect x="216.41" y="96.27" width="2.19" height="2.19" fill="#111"/><rect x="218.91" y="96.27" width="2.19" height="2.19" fill="#111"/><rect x="221.41" y="96.27" width="2.19" height="2.19" fill="#111"/><rect x="223.91" y="96.27" width="2.19" height="2.19" fill="#111"/><rect x="176.35" y="98.76" width="2.32" height="2.32" fill="#111"/><rect x="178.85" y="98.76" width="2.32" height="2.32" fill="#111"/><rect x="181.35" y="98.76" width="2.32" height="2.32" fill="#111"/><rect x="183.85" y="98.76" width="2.32" height="2.32" fill="#111"/><rect x="186.35" y="98.76" width="2.32" height="2.32" fill="#111"/><rect x="188.85" y="98.76" width="2.32" height="2.32" fill="#111"/><rect x="191.35" y="98.76" width="2.32" height="2.32" fill="#111"/><rect x="193.85" y="98.76" width="2.32" height="2.32" fill="#111"/><rect x="196.35" y="98.76" width="2.32" height="2.32" fill="#111"/><rect x="198.85" y="98.76" width="2.32" height="2.32" fill="#111"/><rect x="201.35" y="98.76" width="2.32" height="2.32" fill="#111"/><rect x="203.85" y="98.76" width="2.32" height="2.32" fill="#111"/><rect x="206.35" y="98.76" width="2.32" height="2.32" fill="#111"/><rect x="208.85" y="98.76" width="2.32" height="2.32" fill="#111"/><rect x="211.35" y="98.76" width="2.32" height="2.32" fill="#111"/><rect x="213.85" y="98.76" width="2.32" height="2.32" fill="#111"/><rect x="216.35" y="98.76" width="2.32" height="2.32" fill="#111"/><rect x="218.85" y="98.76" width="2.32" height="2.32" fill="#111"/><rect x="221.35" y="98.76" width="2.32" height="2.32" fill="#111"/><rect x="223.85" y="98.76" width="2.32" height="2.32" fill="#111"/><rect x="176.29" y="101.25" width="2.44" height="2.44" fill="#111"/><rect x="178.79" y="101.25" width="2.44" height="2.44" fill="#111"/><rect x="181.29" y="101.25" width="2.44" height="2.44" fill="#111"/><rect x="183.79" y="101.25" width="2.44" height="2.44" fill="#111"/><rect x="186.29" y="101.25" width="2.44" height="2.44" fill="#111"/><rect x="188.79" y="101.25" width="2.44" height="2.44" fill="#111"/><rect x="191.29" y="101.25" width="2.44" height="2.44" fill="#111"/><rect x="193.79" y="101.25" width="2.44" height="2.44" fill="#111"/><rect x="196.29" y="101.25" width="2.44" height="2.44" fill="#111"/><rect x="198.79" y="101.25" width="2.44" height="2.44" fill="#111"/><rect x="201.29" y="101.25" width="2.44" height="2.44" fill="#111"/><rect x="203.79" y="101.25" width="2.44" height="2.44" fill="#111"/><rect x="206.29" y="101.25" width="2.44" height="2.44" fill="#111"/><rect x="208.79" y="101.25" width="2.44" height="2.44" fill="#111"/><rect x="211.29" y="101.25" width="2.44" height="2.44" fill="#111"/><rect x="213.79" y="101.25" width="2.44" height="2.44" fill="#111"/><rect x="216.29" y="101.25" width="2.44" height="2.44" fill="#111"/><rect x="218.79" y="101.25" width="2.44" height="2.44" fill="#111"/><rect x="221.29" y="101.25" width="2.44" height="2.44" fill="#111"/><rect x="223.79" y="101.25" width="2.44" height="2.44" fill="#111"/><rect x="176.23" y="103.74" width="2.56" height="2.56" fill="#111"/><rect x="178.73" y="103.74" width="2.56" height="2.56" fill="#111"/><rect x="181.23" y="103.74" width="2.56" height="2.56" fill="#111"/><rect x="183.73" y="103.74" width="2.56" height="2.56" fill="#111"/><rect x="186.23" y="103.74" width="2.56" height="2.56" fill="#111"/><rect x="188.73" y="103.74" width="2.56" height="2.56" fill="#111"/><rect x="191.23" y="103.74" width="2.56" height="2.56" fill="#111"/><rect x="193.73" y="103.74" width="2.56" height="2.56" fill="#111"/><rect x="196.23" y="103.74" width="2.56" height="2.56" fill="#111"/><rect x="198.73" y="103.74" width="2.56" height="2.56" fill="#111"/><rect x="201.23" y="103.74" width="2.56" height="2.56" fill="#111"/><rect x="203.73" y="103.74" width="2.56" height="2.56" fill="#111"/><rect x="206.23" y="103.74" width="2.56" height="2.56" fill="#111"/><rect x="208.73" y="103.74" width="2.56" height="2.56" fill="#111"/><rect x="211.23" y="103.74" width="2.56" height="2.56" fill="#111"/><rect x="213.73" y="103.74" width="2.56" height="2.56" fill="#111"/><rect x="216.23" y="103.74" width="2.56" height="2.56" fill="#111"/><rect x="218.73" y="103.74" width="2.56" height="2.56" fill="#111"/><rect x="221.23" y="103.74" width="2.56" height="2.56" fill="#111"/><rect x="223.73" y="103.74" width="2.56" height="2.56" fill="#111"/><rect x="176.17" y="106.23" width="2.68" height="2.68" fill="#111"/><rect x="178.67" y="106.23" width="2.68" height="2.68" fill="#111"/><rect x="181.17" y="106.23" width="2.68" height="2.68" fill="#111"/><rect x="183.67" y="106.23" width="2.68" height="2.68" fill="#111"/><rect x="186.17" y="106.23" width="2.68" height="2.68" fill="#111"/><rect x="188.67" y="106.23" width="2.68" height="2.68" fill="#111"/><rect x="191.17" y="106.23" width="2.68" height="2.68" fill="#111"/><rect x="193.67" y="106.23" width="2.68" height="2.68" fill="#111"/><rect x="196.17" y="106.23" width="2.68" height="2.68" fill="#111"/><rect x="198.67" y="106.23" width="2.68" height="2.68" fill="#111"/><rect x="201.17" y="106.23" width="2.68" height="2.68" fill="#111"/><rect x="203.67" y="106.23" width="2.68" height="2.68" fill="#111"/><rect x="206.17" y="106.23" width="2.68" height="2.68" fill="#111"/><rect x="208.67" y="106.23" width="2.68" height="2.68" fill="#111"/><rect x="211.17" y="106.23" width="2.68" height="2.68" fill="#111"/><rect x="213.67" y="106.23" width="2.68" height="2.68" fill="#111"/><rect x="216.17" y="106.23" width="2.68" height="2.68" fill="#111"/><rect x="218.67" y="106.23" width="2.68" height="2.68" fill="#111"/><rect x="221.17" y="106.23" width="2.68" height="2.68" fill="#111"/><rect x="223.67" y="106.23" width="2.68" height="2.68" fill="#111"/><rect x="176.11" y="108.72" width="2.80" height="2.80" fill="#111"/><rect x="178.61" y="108.72" width="2.80" height="2.80" fill="#111"/><rect x="181.11" y="108.72" width="2.80" height="2.80" fill="#111"/><rect x="183.61" y="108.72" width="2.80" height="2.80" fill="#111"/><rect x="186.11" y="108.72" width="2.80" height="2.80" fill="#111"/><rect x="188.61" y="108.72" width="2.80" height="2.80" fill="#111"/><rect x="191.11" y="108.72" width="2.80" height="2.80" fill="#111"/><rect x="193.61" y="108.72" width="2.80" height="2.80" fill="#111"/><rect x="196.11" y="108.72" width="2.80" height="2.80" fill="#111"/><rect x="198.61" y="108.72" width="2.80" height="2.80" fill="#111"/><rect x="201.11" y="108.72" width="2.80" height="2.80" fill="#111"/><rect x="203.61" y="108.72" width="2.80" height="2.80" fill="#111"/><rect x="206.11" y="108.72" width="2.80" height="2.80" fill="#111"/><rect x="208.61" y="108.72" width="2.80" height="2.80" fill="#111"/><rect x="211.11" y="108.72" width="2.80" height="2.80" fill="#111"/><rect x="213.61" y="108.72" width="2.80" height="2.80" fill="#111"/><rect x="216.11" y="108.72" width="2.80" height="2.80" fill="#111"/><rect x="218.61" y="108.72" width="2.80" height="2.80" fill="#111"/><rect x="221.11" y="108.72" width="2.80" height="2.80" fill="#111"/><rect x="223.61" y="108.72" width="2.80" height="2.80" fill="#111"/></g><defs><linearGradient id="s11" x1="0" y1="0" x2="0" y2="1"><stop offset="0" stop-color="#000"/><stop offset=".55" stop-color="#111"/><stop offset="1" stop-color="#111" stop-opacity=".25"/></linearGradient><clipPath id="c11"><rect x="234.68" y="63.67" width="48" height="44"/></clipPath></defs><rect x="234.68" y="63.67" width="48" height="44" fill="url(#s11)"/><g clip-path="url(#c11)" fill="none" stroke="#d8d8d8" stroke-width=".55"><circle cx="259.68" cy="87.67" r="2.1" opacity="0.88"/><circle cx="259.68" cy="87.67" r="4.2" opacity="0.81"/><circle cx="259.68" cy="87.67" r="6.3" opacity="0.74"/><circle cx="259.68" cy="87.67" r="8.4" opacity="0.67"/><circle cx="259.68" cy="87.67" r="10.5" opacity="0.60"/><circle cx="259.68" cy="87.67" r="12.6" opacity="0.53"/><circle cx="259.68" cy="87.67" r="14.7" opacity="0.46"/><circle cx="259.68" cy="87.67" r="16.8" opacity="0.39"/><circle cx="259.68" cy="87.67" r="18.9" opacity="0.32"/><circle cx="259.68" cy="87.67" r="21.0" opacity="0.25"/><circle cx="259.68" cy="87.67" r="23.1" opacity="0.18"/></g><rect x="236.5" y="103.7" width=".9" height=".9" fill="#e2e2e2"/><rect x="270.6" y="102.5" width=".9" height=".9" fill="#e2e2e2"/><rect x="275.8" y="99.4" width=".9" height=".9" fill="#e2e2e2"/><rect x="267.4" y="102.8" width=".9" height=".9" fill="#e2e2e2"/><rect x="261.9" y="101.1" width=".9" height=".9" fill="#e2e2e2"/><rect x="274.2" y="107.0" width=".9" height=".9" fill="#e2e2e2"/><rect x="257.0" y="103.6" width=".9" height=".9" fill="#e2e2e2"/><rect x="237.5" y="104.1" width=".9" height=".9" fill="#e2e2e2"/><rect x="265.1" y="107.6" width=".9" height=".9" fill="#e2e2e2"/><rect x="273.3" y="99.1" width=".9" height=".9" fill="#e2e2e2"/><rect x="252.8" y="103.7" width=".9" height=".9" fill="#e2e2e2"/><rect x="235.7" y="101.2" width=".9" height=".9" fill="#e2e2e2"/><rect x="242.6" y="97.1" width=".9" height=".9" fill="#e2e2e2"/><rect x="237.5" y="104.9" width=".9" height=".9" fill="#e2e2e2"/><rect x="240.8" y="98.6" width=".9" height=".9" fill="#e2e2e2"/><rect x="253.1" y="106.1" width=".9" height=".9" fill="#e2e2e2"/><rect x="238.5" y="101.1" width=".9" height=".9" fill="#e2e2e2"/><rect x="260.5" y="106.3" width=".9" height=".9" fill="#e2e2e2"/><rect x="273.2" y="106.0" width=".9" height=".9" fill="#e2e2e2"/><rect x="247.8" y="100.7" width=".9" height=".9" fill="#e2e2e2"/><rect x="251.5" y="106.3" width=".9" height=".9" fill="#e2e2e2"/><rect x="279.7" y="97.5" width=".9" height=".9" fill="#e2e2e2"/><rect x="243.0" y="98.5" width=".9" height=".9" fill="#e2e2e2"/><rect x="245.6" y="101.5" width=".9" height=".9" fill="#e2e2e2"/><rect x="262.4" y="98.8" width=".9" height=".9" fill="#e2e2e2"/><rect x="234.9" y="100.7" width=".9" height=".9" fill="#e2e2e2"/><rect x="252.0" y="102.5" width=".9" height=".9" fill="#e2e2e2"/><rect x="279.5" y="104.0" width=".9" height=".9" fill="#e2e2e2"/><rect x="258.9" y="103.1" width=".9" height=".9" fill="#e2e2e2"/><rect x="266.5" y="96.3" width=".9" height=".9" fill="#e2e2e2"/><rect x="277.0" y="105.0" width=".9" height=".9" fill="#e2e2e2"/><rect x="275.8" y="105.2" width=".9" height=".9" fill="#e2e2e2"/><rect x="253.1" y="100.5" width=".9" height=".9" fill="#e2e2e2"/><rect x="239.5" y="103.3" width=".9" height=".9" fill="#e2e2e2"/><rect x="237.6" y="96.5" width=".9" height=".9" fill="#e2e2e2"/><rect x="244.5" y="97.6" width=".9" height=".9" fill="#e2e2e2"/><rect x="250.7" y="96.3" width=".9" height=".9" fill="#e2e2e2"/><rect x="234.7" y="97.5" width=".9" height=".9" fill="#e2e2e2"/><rect x="239.4" y="100.0" width=".9" height=".9" fill="#e2e2e2"/><rect x="235.9" y="106.2" width=".9" height=".9" fill="#e2e2e2"/><rect x="263.5" y="97.5" width=".9" height=".9" fill="#e2e2e2"/><rect x="246.5" y="99.8" width=".9" height=".9" fill="#e2e2e2"/><rect x="251.8" y="97.1" width=".9" height=".9" fill="#e2e2e2"/><rect x="274.6" y="107.6" width=".9" height=".9" fill="#e2e2e2"/><rect x="256.6" y="101.5" width=".9" height=".9" fill="#e2e2e2"/><rect x="238.7" y="96.9" width=".9" height=".9" fill="#e2e2e2"/><rect x="250.8" y="98.8" width=".9" height=".9" fill="#e2e2e2"/><rect x="273.6" y="97.6" width=".9" height=".9" fill="#e2e2e2"/><rect x="235.8" y="107.1" width=".9" height=".9" fill="#e2e2e2"/><rect x="259.5" y="97.4" width=".9" height=".9" fill="#e2e2e2"/><rect x="260.2" y="96.0" width=".9" height=".9" fill="#e2e2e2"/><rect x="259.5" y="107.4" width=".9" height=".9" fill="#e2e2e2"/><rect x="275.3" y="104.0" width=".9" height=".9" fill="#e2e2e2"/><rect x="247.0" y="100.1" width=".9" height=".9" fill="#e2e2e2"/><rect x="242.5" y="104.9" width=".9" height=".9" fill="#e2e2e2"/><rect x="259.7" y="105.0" width=".9" height=".9" fill="#e2e2e2"/><rect x="250.2" y="98.3" width=".9" height=".9" fill="#e2e2e2"/><rect x="272.8" y="107.5" width=".9" height=".9" fill="#e2e2e2"/><rect x="274.8" y="105.3" width=".9" height=".9" fill="#e2e2e2"/><rect x="273.1" y="104.5" width=".9" height=".9" fill="#e2e2e2"/><rect x="245.3" y="101.9" width=".9" height=".9" fill="#e2e2e2"/><rect x="251.4" y="96.0" width=".9" height=".9" fill="#e2e2e2"/><rect x="236.0" y="99.0" width=".9" height=".9" fill="#e2e2e2"/><rect x="246.9" y="104.0" width=".9" height=".9" fill="#e2e2e2"/><rect x="279.6" y="101.0" width=".9" height=".9" fill="#e2e2e2"/><rect x="278.7" y="107.5" width=".9" height=".9" fill="#e2e2e2"/><rect x="279.6" y="100.0" width=".9" height=".9" fill="#e2e2e2"/><rect x="245.0" y="98.4" width=".9" height=".9" fill="#e2e2e2"/><rect x="243.9" y="98.1" width=".9" height=".9" fill="#e2e2e2"/><rect x="264.0" y="106.5" width=".9" height=".9" fill="#e2e2e2"/><rect x="274.2" y="101.4" width=".9" height=".9" fill="#e2e2e2"/><rect x="265.4" y="105.3" width=".9" height=".9" fill="#e2e2e2"/><rect x="238.7" y="103.6" width=".9" height=".9" fill="#e2e2e2"/><rect x="277.4" y="105.1" width=".9" height=".9" fill="#e2e2e2"/><rect x="269.9" y="101.4" width=".9" height=".9" fill="#e2e2e2"/><rect x="243.1" y="105.1" width=".9" height=".9" fill="#e2e2e2"/><rect x="250.3" y="105.3" width=".9" height=".9" fill="#e2e2e2"/><rect x="280.3" y="100.4" width=".9" height=".9" fill="#e2e2e2"/><rect x="253.5" y="107.0" width=".9" height=".9" fill="#e2e2e2"/><rect x="268.7" y="97.7" width=".9" height=".9" fill="#e2e2e2"/><rect x="240.7" y="97.5" width=".9" height=".9" fill="#e2e2e2"/><rect x="277.2" y="105.3" width=".9" height=".9" fill="#e2e2e2"/><rect x="241.6" y="105.6" width=".9" height=".9" fill="#e2e2e2"/><rect x="280.8" y="103.6" width=".9" height=".9" fill="#e2e2e2"/><rect x="251.1" y="102.3" width=".9" height=".9" fill="#e2e2e2"/><rect x="240.8" y="95.8" width=".9" height=".9" fill="#e2e2e2"/><rect x="280.3" y="103.5" width=".9" height=".9" fill="#e2e2e2"/><rect x="259.4" y="106.9" width=".9" height=".9" fill="#e2e2e2"/><rect x="255.1" y="106.1" width=".9" height=".9" fill="#e2e2e2"/><rect x="273.5" y="98.2" width=".9" height=".9" fill="#e2e2e2"/><circle cx="316.35" cy="86.67" r="21" fill="#6c6c6c"/><circle cx="316.2" cy="98.8" r="1.2" fill="#4a4a4a"/><circle cx="308.7" cy="101.4" r="0.6" fill="#4a4a4a"/><circle cx="315.0" cy="65.4" r="1.2" fill="#808080"/><circle cx="296.0" cy="84.5" r="0.6" fill="#808080"/><circle cx="325.6" cy="99.8" r="1.2" fill="#3c3c3c"/><circle cx="301.0" cy="74.2" r="0.7" fill="#4a4a4a"/><circle cx="297.5" cy="89.8" r="0.6" fill="#808080"/><circle cx="309.6" cy="71.7" r="1.2" fill="#3c3c3c"/><circle cx="329.6" cy="97.1" r="0.7" fill="#4a4a4a"/><circle cx="323.1" cy="88.5" r="1.0" fill="#3c3c3c"/><circle cx="317.7" cy="65.2" r="0.8" fill="#3c3c3c"/><circle cx="333.6" cy="83.7" r="1.1" fill="#4a4a4a"/><circle cx="300.7" cy="91.5" r="1.0" fill="#3c3c3c"/><circle cx="316.6" cy="102.9" r="1.3" fill="#b4b4b4"/><circle cx="324.3" cy="80.3" r="0.6" fill="#3c3c3c"/><circle cx="327.2" cy="97.0" r="1.1" fill="#9a9a9a"/><circle cx="307.0" cy="91.2" r="1.2" fill="#b4b4b4"/><circle cx="323.4" cy="81.3" r="0.6" fill="#b4b4b4"/><circle cx="332.7" cy="71.8" r="1.2" fill="#4a4a4a"/><circle cx="333.9" cy="98.5" r="1.4" fill="#4a4a4a"/><circle cx="320.8" cy="78.8" r="1.4" fill="#3c3c3c"/><circle cx="304.3" cy="95.0" r="0.8" fill="#b4b4b4"/><circle cx="315.8" cy="83.6" r="0.9" fill="#808080"/><circle cx="312.3" cy="73.3" r="1.1" fill="#808080"/><circle cx="310.7" cy="86.2" r="1.4" fill="#4a4a4a"/><circle cx="325.5" cy="93.8" r="1.3" fill="#9a9a9a"/><circle cx="324.5" cy="104.4" r="1.3" fill="#3c3c3c"/><circle cx="306.5" cy="67.1" r="0.6" fill="#3c3c3c"/><circle cx="331.2" cy="78.4" r="0.6" fill="#b4b4b4"/><circle cx="333.8" cy="93.3" r="1.3" fill="#3c3c3c"/><circle cx="316.0" cy="89.6" r="1.2" fill="#9a9a9a"/><circle cx="334.4" cy="97.1" r="0.7" fill="#9a9a9a"/><circle cx="318.1" cy="88.3" r="0.9" fill="#808080"/><circle cx="331.6" cy="77.7" r="1.0" fill="#9a9a9a"/><circle cx="316.9" cy="94.1" r="0.7" fill="#4a4a4a"/><circle cx="325.5" cy="106.4" r="1.0" fill="#b4b4b4"/><circle cx="320.5" cy="101.1" r="0.7" fill="#4a4a4a"/><circle cx="323.8" cy="65.5" r="0.5" fill="#9a9a9a"/><circle cx="314.6" cy="70.1" r="1.0" fill="#4a4a4a"/><circle cx="316.8" cy="101.7" r="1.1" fill="#3c3c3c"/><circle cx="296.0" cy="80.6" r="0.8" fill="#808080"/><circle cx="318.7" cy="97.2" r="1.2" fill="#4a4a4a"/><circle cx="311.5" cy="69.4" r="1.4" fill="#3c3c3c"/><circle cx="336.8" cy="84.3" r="0.6" fill="#9a9a9a"/><circle cx="315.7" cy="75.3" r="0.5" fill="#4a4a4a"/><circle cx="309.3" cy="74.7" r="1.1" fill="#808080"/><circle cx="314.1" cy="97.5" r="0.5" fill="#b4b4b4"/><circle cx="321.0" cy="97.4" r="0.7" fill="#9a9a9a"/><circle cx="337.9" cy="81.4" r="0.8" fill="#808080"/><circle cx="337.0" cy="91.2" r="0.8" fill="#4a4a4a"/><circle cx="330.2" cy="86.8" r="0.8" fill="#3c3c3c"/><circle cx="310.1" cy="77.4" r="0.6" fill="#9a9a9a"/><circle cx="319.8" cy="78.9" r="0.5" fill="#808080"/><circle cx="328.6" cy="88.4" r="0.6" fill="#4a4a4a"/><circle cx="336.4" cy="81.2" r="1.1" fill="#4a4a4a"/><circle cx="311.9" cy="66.1" r="1.2" fill="#3c3c3c"/><circle cx="313.5" cy="71.1" r="1.2" fill="#b4b4b4"/><circle cx="313.4" cy="83.0" r="1.1" fill="#808080"/><circle cx="314.3" cy="66.5" r="1.3" fill="#4a4a4a"/><circle cx="316.7" cy="69.7" r="1.2" fill="#9a9a9a"/><circle cx="298.0" cy="76.0" r="0.6" fill="#4a4a4a"/><circle cx="333.7" cy="91.3" r="0.8" fill="#9a9a9a"/><circle cx="311.5" cy="88.2" r="1.1" fill="#9a9a9a"/><circle cx="309.7" cy="72.4" r="0.9" fill="#9a9a9a"/><circle cx="336.0" cy="95.9" r="0.6" fill="#808080"/><circle cx="297.2" cy="83.5" r="0.7" fill="#3c3c3c"/><circle cx="326.7" cy="91.9" r="0.7" fill="#4a4a4a"/><circle cx="307.4" cy="74.3" r="0.6" fill="#3c3c3c"/><circle cx="326.6" cy="80.2" r="1.1" fill="#9a9a9a"/><circle cx="312.4" cy="81.8" r="0.8" fill="#4a4a4a"/><circle cx="305.5" cy="71.4" r="1.0" fill="#808080"/><circle cx="321.9" cy="87.1" r="1.4" fill="#b4b4b4"/><circle cx="324.9" cy="92.8" r="0.8" fill="#3c3c3c"/><circle cx="301.1" cy="85.1" r="1.2" fill="#3c3c3c"/><circle cx="333.0" cy="86.0" r="1.4" fill="#b4b4b4"/><circle cx="319.1" cy="85.5" r="0.6" fill="#3c3c3c"/><circle cx="293.9" cy="85.7" r="0.8" fill="#b4b4b4"/><circle cx="335.1" cy="75.8" r="1.0" fill="#9a9a9a"/><circle cx="326.6" cy="99.3" r="0.6" fill="#b4b4b4"/><circle cx="323.2" cy="72.2" r="1.1" fill="#9a9a9a"/><circle cx="318.8" cy="107.8" r="0.9" fill="#3c3c3c"/><circle cx="328.2" cy="105.1" r="0.9" fill="#3c3c3c"/><circle cx="314.3" cy="72.3" r="0.8" fill="#3c3c3c"/><circle cx="316.9" cy="85.9" r="1.3" fill="#b4b4b4"/><circle cx="332.1" cy="101.5" r="1.3" fill="#9a9a9a"/><circle cx="313.0" cy="100.0" r="0.9" fill="#3c3c3c"/><circle cx="320.6" cy="82.1" r="1.2" fill="#3c3c3c"/><circle cx="323.6" cy="77.2" r="1.3" fill="#9a9a9a"/><circle cx="311.5" cy="107.9" r="1.4" fill="#4a4a4a"/><circle cx="304.7" cy="91.6" r="1.2" fill="#b4b4b4"/><circle cx="312.9" cy="88.4" r="1.3" fill="#3c3c3c"/><circle cx="331.9" cy="80.6" r="0.5" fill="#9a9a9a"/><circle cx="314.7" cy="71.7" r="1.1" fill="#4a4a4a"/><circle cx="315.2" cy="91.5" r="0.6" fill="#808080"/><circle cx="303.4" cy="89.0" r="0.7" fill="#b4b4b4"/><circle cx="315.1" cy="68.5" r="1.1" fill="#3c3c3c"/><circle cx="311.1" cy="102.6" r="0.6" fill="#3c3c3c"/><circle cx="312.5" cy="81.8" r="1.3" fill="#808080"/><circle cx="305.8" cy="86.9" r="1.4" fill="#b4b4b4"/><circle cx="308.4" cy="89.3" r="0.7" fill="#4a4a4a"/><circle cx="324.0" cy="101.6" r="0.7" fill="#b4b4b4"/><circle cx="315.5" cy="103.6" r="1.2" fill="#9a9a9a"/><circle cx="304.0" cy="94.2" r="0.7" fill="#808080"/><circle cx="313.9" cy="106.0" r="0.7" fill="#3c3c3c"/><circle cx="324.2" cy="85.1" r="1.0" fill="#808080"/><circle cx="321.5" cy="66.6" r="0.7" fill="#9a9a9a"/><circle cx="316.5" cy="100.9" r="0.9" fill="#3c3c3c"/><circle cx="308.6" cy="105.5" r="0.6" fill="#9a9a9a"/><circle cx="298.8" cy="95.6" r="1.4" fill="#3c3c3c"/><circle cx="310.3" cy="87.1" r="1.3" fill="#808080"/><circle cx="327.4" cy="84.7" r="0.7" fill="#9a9a9a"/><circle cx="329.2" cy="104.8" r="1.3" fill="#9a9a9a"/><circle cx="313.1" cy="68.9" r="0.6" fill="#3c3c3c"/><circle cx="316.5" cy="85.9" r="0.7" fill="#4a4a4a"/><circle cx="332.2" cy="78.0" r="1.4" fill="#b4b4b4"/><circle cx="304.9" cy="75.0" r="1.1" fill="#3c3c3c"/><circle cx="320.9" cy="90.5" r="1.3" fill="#808080"/><circle cx="320.5" cy="97.4" r="0.5" fill="#808080"/><circle cx="294.5" cy="81.4" r="1.4" fill="#b4b4b4"/><circle cx="303.3" cy="70.0" r="1.0" fill="#3c3c3c"/><circle cx="312.7" cy="85.5" r="1.1" fill="#3c3c3c"/><circle cx="315.2" cy="89.8" r="1.3" fill="#3c3c3c"/><circle cx="312.5" cy="81.6" r="1.1" fill="#4a4a4a"/><circle cx="325.9" cy="81.8" r="1.1" fill="#9a9a9a"/><circle cx="313.7" cy="73.4" r="0.7" fill="#3c3c3c"/><circle cx="322.0" cy="68.2" r="0.6" fill="#808080"/><circle cx="306.3" cy="86.9" r="0.7" fill="#4a4a4a"/><circle cx="319.9" cy="106.0" r="0.6" fill="#b4b4b4"/><circle cx="303.8" cy="74.4" r="0.9" fill="#4a4a4a"/><circle cx="320.9" cy="83.8" r="0.6" fill="#808080"/><circle cx="308.2" cy="93.1" r="0.6" fill="#808080"/><circle cx="321.6" cy="88.4" r="0.9" fill="#3c3c3c"/><circle cx="313.4" cy="74.4" r="1.4" fill="#9a9a9a"/><circle cx="328.1" cy="81.3" r="1.1" fill="#4a4a4a"/><circle cx="301.2" cy="84.3" r="1.1" fill="#b4b4b4"/><circle cx="306.4" cy="96.2" r="0.9" fill="#b4b4b4"/><circle cx="321.2" cy="90.6" r="0.8" fill="#9a9a9a"/><circle cx="324.0" cy="84.5" r="0.8" fill="#4a4a4a"/><circle cx="317.8" cy="74.3" r="0.6" fill="#3c3c3c"/><circle cx="313.6" cy="77.1" r="1.3" fill="#808080"/><circle cx="321.1" cy="99.4" r="0.5" fill="#3c3c3c"/><circle cx="299.2" cy="97.4" r="0.5" fill="#3c3c3c"/><circle cx="321.8" cy="87.9" r="0.7" fill="#9a9a9a"/><circle cx="316.0" cy="65.3" r="0.8" fill="#b4b4b4"/><circle cx="305.2" cy="105.6" r="0.7" fill="#9a9a9a"/><circle cx="313.7" cy="74.3" r="0.8" fill="#b4b4b4"/><circle cx="313.3" cy="69.6" r="0.5" fill="#9a9a9a"/><circle cx="317.9" cy="102.1" r="1.4" fill="#3c3c3c"/><circle cx="307.8" cy="94.0" r="1.2" fill="#3c3c3c"/><circle cx="327.0" cy="98.4" r="1.2" fill="#9a9a9a"/><circle cx="314.9" cy="66.3" r="1.0" fill="#4a4a4a"/><circle cx="310.4" cy="97.9" r="1.2" fill="#b4b4b4"/><circle cx="303.1" cy="77.6" r="1.2" fill="#3c3c3c"/><circle cx="316.4" cy="92.4" r="0.9" fill="#9a9a9a"/><circle cx="307.7" cy="84.2" r="1.3" fill="#3c3c3c"/><circle cx="327.9" cy="85.8" r="0.7" fill="#9a9a9a"/><circle cx="296.7" cy="97.3" r="0.7" fill="#3c3c3c"/><circle cx="326.6" cy="98.0" r="1.2" fill="#4a4a4a"/><circle cx="326.8" cy="71.6" r="1.2" fill="#9a9a9a"/><circle cx="313.1" cy="98.1" r="0.8" fill="#b4b4b4"/><circle cx="315.6" cy="76.7" r="0.7" fill="#4a4a4a"/><circle cx="317.4" cy="98.6" r="0.7" fill="#808080"/><circle cx="326.7" cy="91.1" r="1.0" fill="#4a4a4a"/><circle cx="318.7" cy="106.8" r="1.4" fill="#3c3c3c"/><circle cx="328.8" cy="96.0" r="1.3" fill="#4a4a4a"/><circle cx="320.2" cy="84.4" r="0.7" fill="#b4b4b4"/><circle cx="332.9" cy="92.1" r="0.7" fill="#808080"/><circle cx="330.7" cy="94.0" r="0.9" fill="#4a4a4a"/><circle cx="315.1" cy="106.5" r="0.6" fill="#9a9a9a"/><circle cx="301.8" cy="76.6" r="0.5" fill="#4a4a4a"/><circle cx="313.8" cy="90.7" r="0.5" fill="#b4b4b4"/><circle cx="314.0" cy="65.3" r="1.2" fill="#9a9a9a"/><circle cx="304.8" cy="94.1" r="0.8" fill="#808080"/><circle cx="322.1" cy="105.9" r="0.9" fill="#808080"/><circle cx="299.5" cy="97.6" r="0.6" fill="#808080"/><circle cx="298.6" cy="82.8" r="1.1" fill="#3c3c3c"/><circle cx="306.2" cy="93.1" r="0.9" fill="#b4b4b4"/><circle cx="334.8" cy="92.8" r="0.9" fill="#b4b4b4"/><circle cx="335.9" cy="88.9" r="1.1" fill="#b4b4b4"/><circle cx="305.3" cy="95.7" r="0.9" fill="#9a9a9a"/><circle cx="320.5" cy="93.0" r="0.9" fill="#9a9a9a"/><circle cx="327.7" cy="76.4" r="0.6" fill="#4a4a4a"/><circle cx="324.4" cy="89.4" r="0.6" fill="#3c3c3c"/><circle cx="306.5" cy="77.2" r="0.7" fill="#808080"/><circle cx="311.1" cy="94.1" r="1.3" fill="#4a4a4a"/><circle cx="328.6" cy="96.6" r="0.8" fill="#4a4a4a"/><circle cx="318.8" cy="82.7" r="0.8" fill="#3c3c3c"/><circle cx="302.4" cy="75.4" r="1.3" fill="#9a9a9a"/><circle cx="301.5" cy="72.7" r="1.1" fill="#4a4a4a"/><circle cx="327.4" cy="72.8" r="1.3" fill="#808080"/><circle cx="320.9" cy="78.2" r="0.5" fill="#4a4a4a"/><circle cx="324.6" cy="83.3" r="0.6" fill="#b4b4b4"/><circle cx="316.7" cy="105.8" r="0.5" fill="#4a4a4a"/><circle cx="298.3" cy="79.2" r="1.1" fill="#9a9a9a"/><circle cx="310.0" cy="99.2" r="1.0" fill="#3c3c3c"/><circle cx="307.7" cy="77.8" r="0.8" fill="#3c3c3c"/><circle cx="316.4" cy="100.7" r="0.9" fill="#b4b4b4"/><circle cx="313.2" cy="88.0" r="1.4" fill="#808080"/><circle cx="301.7" cy="89.9" r="1.2" fill="#808080"/><circle cx="307.1" cy="89.1" r="0.9" fill="#3c3c3c"/><circle cx="328.6" cy="92.2" r="0.6" fill="#b4b4b4"/><circle cx="301.3" cy="92.4" r="0.5" fill="#9a9a9a"/><circle cx="331.1" cy="102.4" r="1.2" fill="#b4b4b4"/><circle cx="311.1" cy="86.3" r="1.3" fill="#808080"/><circle cx="304.9" cy="70.4" r="1.3" fill="#9a9a9a"/><circle cx="335.6" cy="86.2" r="0.7" fill="#9a9a9a"/><circle cx="332.0" cy="84.9" r="1.1" fill="#4a4a4a"/><circle cx="314.4" cy="76.3" r="1.0" fill="#b4b4b4"/><circle cx="316.2" cy="99.5" r="0.7" fill="#808080"/><circle cx="319.8" cy="78.9" r="1.4" fill="#808080"/><circle cx="299.2" cy="88.8" r="1.0" fill="#808080"/><circle cx="314.5" cy="90.6" r="0.9" fill="#4a4a4a"/><circle cx="308.6" cy="77.7" r="1.3" fill="#b4b4b4"/><circle cx="326.1" cy="104.1" r="1.2" fill="#9a9a9a"/><circle cx="336.2" cy="92.9" r="1.0" fill="#3c3c3c"/><circle cx="297.8" cy="76.5" r="0.7" fill="#9a9a9a"/><circle cx="296.0" cy="82.0" r="0.7" fill="#b4b4b4"/><circle cx="333.4" cy="85.6" r="0.8" fill="#b4b4b4"/><circle cx="325.8" cy="92.0" r="1.2" fill="#808080"/><circle cx="335.8" cy="92.8" r="0.8" fill="#b4b4b4"/><circle cx="336.9" cy="82.2" r="1.2" fill="#b4b4b4"/><circle cx="316.2" cy="76.1" r="1.1" fill="#b4b4b4"/><circle cx="301.7" cy="93.3" r="0.6" fill="#9a9a9a"/><circle cx="318.9" cy="104.7" r="0.5" fill="#9a9a9a"/><circle cx="305.0" cy="81.6" r="0.8" fill="#808080"/><circle cx="319.1" cy="103.6" r="0.6" fill="#808080"/><circle cx="302.7" cy="101.9" r="0.6" fill="#4a4a4a"/><circle cx="326.6" cy="82.4" r="0.9" fill="#4a4a4a"/><circle cx="324.2" cy="90.0" r="0.9" fill="#b4b4b4"/><circle cx="316.1" cy="89.1" r="1.3" fill="#808080"/><circle cx="302.2" cy="77.1" r="1.3" fill="#808080"/><circle cx="315.2" cy="75.5" r="0.5" fill="#9a9a9a"/><circle cx="302.3" cy="83.8" r="0.6" fill="#4a4a4a"/><circle cx="322.5" cy="82.8" r="1.0" fill="#808080"/><circle cx="324.3" cy="83.6" r="1.0" fill="#4a4a4a"/><circle cx="305.0" cy="72.5" r="1.2" fill="#3c3c3c"/><circle cx="322.1" cy="97.8" r="1.1" fill="#b4b4b4"/><circle cx="335.5" cy="86.0" r="1.1" fill="#3c3c3c"/><circle cx="337.0" cy="87.5" r="0.6" fill="#3c3c3c"/><circle cx="311.1" cy="78.9" r="0.7" fill="#9a9a9a"/><circle cx="311.5" cy="80.5" r="1.1" fill="#b4b4b4"/><circle cx="314.7" cy="103.3" r="1.1" fill="#3c3c3c"/><circle cx="335.6" cy="75.6" r="1.1" fill="#b4b4b4"/><circle cx="326.6" cy="84.4" r="0.5" fill="#808080"/><circle cx="315.6" cy="97.6" r="1.4" fill="#4a4a4a"/><circle cx="316.0" cy="73.8" r="0.8" fill="#3c3c3c"/><circle cx="317.8" cy="108.1" r="0.9" fill="#808080"/><circle cx="326.4" cy="70.8" r="0.9" fill="#9a9a9a"/><circle cx="313.6" cy="69.9" r="1.2" fill="#b4b4b4"/><circle cx="303.0" cy="97.5" r="1.3" fill="#808080"/><circle cx="318.6" cy="89.6" r="1.1" fill="#9a9a9a"/><circle cx="328.1" cy="105.6" r="0.5" fill="#9a9a9a"/><circle cx="328.0" cy="100.5" r="1.1" fill="#9a9a9a"/><circle cx="315.9" cy="80.9" r="1.2" fill="#808080"/><circle cx="323.2" cy="107.5" r="1.3" fill="#808080"/><circle cx="335.5" cy="95.1" r="0.6" fill="#3c3c3c"/><circle cx="318.4" cy="93.9" r="1.4" fill="#9a9a9a"/><circle cx="332.9" cy="76.3" r="1.2" fill="#9a9a9a"/><circle cx="308.2" cy="77.8" r="0.6" fill="#9a9a9a"/><circle cx="321.1" cy="69.2" r="0.8" fill="#b4b4b4"/><circle cx="331.35" cy="102.67" r="2.2" fill="#707070"/><circle cx="335.35" cy="65.67" r="1" fill="#707070"/><circle cx="300.35" cy="67.67" r="1" fill="#707070"/><circle cx="326.35" cy="104.67" r="1.6" fill="#707070"/><circle cx="296.35" cy="81.67" r="0.8" fill="#707070"/><circle cx="337.35" cy="83.67" r="0.9" fill="#707070"/><defs><clipPath id="c13"><rect x="0" y="115.34" width="120" height="33.2"/></clipPath></defs><g clip-path="url(#c13)"><path d="M12.0 139.34 C22.0 133.34 34.0 133.34 44.0 139.34 L45.0 146.34 C34.0 140.34 22.0 140.34 11.0 146.34 Z" fill="#fff" stroke="#222" stroke-width="1.1"/><path d="M11.0 146.34 L3.0 149.34 L7.0 143.34 L12.0 142.34 M45.0 146.34 L53.0 149.34 L49.0 143.34 L44.0 142.34" fill="#fff" stroke="#222" stroke-width="1.1"/><path d="M82.0 118.9 v2.5" stroke="#8a8a8a" stroke-width=".7"/><path d="M75.2 136.9 v3.0" stroke="#8a8a8a" stroke-width=".7"/><path d="M77.1 143.4 v3.5" stroke="#8a8a8a" stroke-width=".7"/><path d="M102.5 134.4 v1.6" stroke="#8a8a8a" stroke-width=".7"/><path d="M81.5 129.7 v4.6" stroke="#8a8a8a" stroke-width=".7"/><path d="M78.3 136.7 v3.7" stroke="#8a8a8a" stroke-width=".7"/><path d="M72.1 140.8 v1.9" stroke="#8a8a8a" stroke-width=".7"/><path d="M101.0 122.8 v1.5" stroke="#8a8a8a" stroke-width=".7"/><path d="M71.4 138.2 v5.4" stroke="#8a8a8a" stroke-width=".7"/><path d="M61.9 131.1 v3.5" stroke="#8a8a8a" stroke-width=".7"/><path d="M99.9 123.1 v3.5" stroke="#8a8a8a" stroke-width=".7"/><path d="M78.3 140.0 v2.5" stroke="#8a8a8a" stroke-width=".7"/><path d="M107.0 125.7 v2.4" stroke="#8a8a8a" stroke-width=".7"/><path d="M95.2 131.3 v1.9" stroke="#8a8a8a" stroke-width=".7"/><path d="M92.2 120.4 v4.7" stroke="#8a8a8a" stroke-width=".7"/><path d="M95.1 138.8 v4.0" stroke="#8a8a8a" stroke-width=".7"/><path d="M78.7 128.8 v3.1" stroke="#8a8a8a" stroke-width=".7"/><path d="M104.4 120.6 v5.1" stroke="#8a8a8a" stroke-width=".7"/><path d="M62.9 123.7 v2.6" stroke="#8a8a8a" stroke-width=".7"/><path d="M104.9 131.4 v3.0" stroke="#8a8a8a" stroke-width=".7"/><path d="M104.1 124.4 v3.3" stroke="#8a8a8a" stroke-width=".7"/><path d="M87.2 138.0 v4.5" stroke="#8a8a8a" stroke-width=".7"/><path d="M92.7 127.4 v2.8" stroke="#8a8a8a" stroke-width=".7"/><path d="M69.1 140.3 v4.1" stroke="#8a8a8a" stroke-width=".7"/><path d="M97.3 122.7 v3.3" stroke="#8a8a8a" stroke-width=".7"/><path d="M98.8 133.4 v2.0" stroke="#8a8a8a" stroke-width=".7"/><path d="M83.8 141.4 v2.5" stroke="#8a8a8a" stroke-width=".7"/><path d="M70.9 126.2 v4.3" stroke="#8a8a8a" stroke-width=".7"/><path d="M102.2 122.4 v2.1" stroke="#8a8a8a" stroke-width=".7"/><path d="M73.6 126.8 v3.6" stroke="#8a8a8a" stroke-width=".7"/><path d="M69.4 126.9 v2.3" stroke="#8a8a8a" stroke-width=".7"/><path d="M108.5 137.3 v1.9" stroke="#8a8a8a" stroke-width=".7"/><path d="M107.9 121.0 v3.0" stroke="#8a8a8a" stroke-width=".7"/><path d="M108.9 139.0 v4.4" stroke="#8a8a8a" stroke-width=".7"/><path d="M82.5 123.4 v4.1" stroke="#8a8a8a" stroke-width=".7"/><path d="M66.8 123.7 v3.1" stroke="#8a8a8a" stroke-width=".7"/><path d="M63.3 128.7 v4.7" stroke="#8a8a8a" stroke-width=".7"/><path d="M95.0 131.4 v4.0" stroke="#8a8a8a" stroke-width=".7"/><path d="M83.9 122.0 v3.9" stroke="#8a8a8a" stroke-width=".7"/><path d="M81.1 137.6 v5.1" stroke="#8a8a8a" stroke-width=".7"/><path d="M82.3 133.3 v4.5" stroke="#8a8a8a" stroke-width=".7"/><path d="M81.9 124.3 v4.4" stroke="#8a8a8a" stroke-width=".7"/><path d="M103.9 138.5 v4.3" stroke="#8a8a8a" stroke-width=".7"/><path d="M102.6 136.0 v4.1" stroke="#8a8a8a" stroke-width=".7"/><path d="M83.5 126.5 v4.0" stroke="#8a8a8a" stroke-width=".7"/><path d="M66.4 129.2 v4.6" stroke="#8a8a8a" stroke-width=".7"/><path d="M95.9 134.7 v2.5" stroke="#8a8a8a" stroke-width=".7"/><path d="M82.0 130.2 v4.0" stroke="#8a8a8a" stroke-width=".7"/><path d="M81.3 135.9 v5.2" stroke="#8a8a8a" stroke-width=".7"/><path d="M70.5 135.4 v4.6" stroke="#8a8a8a" stroke-width=".7"/><path d="M80.3 131.1 v5.4" stroke="#8a8a8a" stroke-width=".7"/><path d="M63.5 132.5 v2.1" stroke="#8a8a8a" stroke-width=".7"/><path d="M99.2 142.8 v3.6" stroke="#8a8a8a" stroke-width=".7"/><path d="M66.5 133.3 v3.7" stroke="#8a8a8a" stroke-width=".7"/><path d="M96.1 131.7 v4.1" stroke="#8a8a8a" stroke-width=".7"/><path d="M101.5 131.9 v3.1" stroke="#8a8a8a" stroke-width=".7"/><path d="M107.2 123.8 v4.2" stroke="#8a8a8a" stroke-width=".7"/><path d="M80.5 138.2 v2.0" stroke="#8a8a8a" stroke-width=".7"/><path d="M108.9 127.6 v1.7" stroke="#8a8a8a" stroke-width=".7"/><path d="M74.8 128.7 v1.6" stroke="#8a8a8a" stroke-width=".7"/><path d="M81.8 129.3 v4.3" stroke="#8a8a8a" stroke-width=".7"/><path d="M78.6 125.2 v2.4" stroke="#8a8a8a" stroke-width=".7"/><path d="M97.3 142.8 v3.6" stroke="#8a8a8a" stroke-width=".7"/><path d="M72.2 139.2 v3.1" stroke="#8a8a8a" stroke-width=".7"/><path d="M71.8 121.7 v4.6" stroke="#8a8a8a" stroke-width=".7"/><path d="M100.5 134.8 v3.4" stroke="#8a8a8a" stroke-width=".7"/><path d="M88.6 124.2 v5.4" stroke="#8a8a8a" stroke-width=".7"/><path d="M78.6 134.9 v4.8" stroke="#8a8a8a" stroke-width=".7"/><path d="M100.8 130.5 v2.7" stroke="#8a8a8a" stroke-width=".7"/><path d="M88.0 121.6 v4.8" stroke="#8a8a8a" stroke-width=".7"/><path d="M78.7 140.5 v2.6" stroke="#8a8a8a" stroke-width=".7"/><path d="M79.7 124.9 v3.2" stroke="#8a8a8a" stroke-width=".7"/><path d="M70.6 118.4 v4.4" stroke="#8a8a8a" stroke-width=".7"/><path d="M75.2 124.7 v2.7" stroke="#8a8a8a" stroke-width=".7"/><path d="M84.7 129.5 v4.0" stroke="#8a8a8a" stroke-width=".7"/></g></svg>
<div style="left:1944.5px;top:337.5px;width:21.0px;height:149.0px;background:#4a4a4a;"></div>
<svg style="left:1947.5px;top:343px;" width="13" height="8" viewBox="0 0 13 8"><path d="M1 7 L6.5 1.5 L12 7" fill="none" stroke="#a8a8a8" stroke-width="1.6"/></svg>
<svg style="left:1947.5px;top:471px;" width="13" height="8" viewBox="0 0 13 8"><path d="M1 1 L6.5 6.5 L12 1" fill="none" stroke="#a8a8a8" stroke-width="1.6"/></svg>
<div style="left:1946.5px;top:359px;width:17.0px;height:89px;background:#5b5b5b;border-radius:8.5px;"></div>
<svg style="left:1574px;top:495px;" width="28" height="22" viewBox="0 0 28 22"><rect x="1" y="1" width="4.2" height="16.5" fill="#cdcdcd"/><rect x="7.2" y="1" width="4.2" height="16.5" fill="#cdcdcd"/><path d="M13 2.5 L17 1.3 L21.5 17 L17.5 18 Z" fill="#cdcdcd"/><path d="M22 16.5 h5.5 l-2.75 3.5z" fill="#cdcdcd"/></svg>
<svg style="left:1718.5px;top:496px;" width="18" height="18" viewBox="0 0 18 18"><path d="M2.5 1 V9.5 H10" fill="none" stroke="#cdcdcd" stroke-width="3"/><path d="M9.5 3 L17.5 9.5 L9.5 16 Z" fill="#cdcdcd"/></svg>
<svg style="left:1760.5px;top:494px;" width="26" height="22" viewBox="0 0 26 22"><path d="M10.5 6.7 H7.2 a4.4 4.4 0 0 0 0 8.8 H12.5 a4.4 4.4 0 0 0 3.2 -1.6 M15.5 15.5 H18.8 a4.4 4.4 0 0 0 0 -8.8 H13.5 a4.4 4.4 0 0 0 -3.2 1.6" fill="none" stroke="#cdcdcd" stroke-width="2.7"/><path d="M3.5 0.5 L24 21" stroke="#535353" stroke-width="4.6"/><path d="M2.5 0.8 L24 21.2" stroke="#cdcdcd" stroke-width="1.9"/></svg>
<svg style="left:1808.5px;top:496px;" width="20" height="19" viewBox="0 0 20 19"><rect x="1" y="1" width="18" height="17" fill="none" stroke="#cdcdcd" stroke-width="1.7"/><rect x="1" y="1" width="18" height="3.4" fill="#cdcdcd"/><path d="M4 8 h2 M8 8 h8 M4 11.5 h2 M8 11.5 h8 M4 15 h2 M8 15 h8" stroke="#cdcdcd" stroke-width="1.6"/></svg>
<svg style="left:1855.5px;top:496px;" width="19" height="19" viewBox="0 0 19 19"><rect x="1" y="1" width="17" height="17" fill="none" stroke="#cdcdcd" stroke-width="1.7"/><path d="M5 9.5 h9 M9.5 5 v9" stroke="#cdcdcd" stroke-width="1.7"/></svg>
<svg style="left:1899px;top:494px;" width="19" height="22" viewBox="0 0 19 22"><path d="M0 4.2 H19" stroke="#cdcdcd" stroke-width="1.8"/><path d="M6.5 3.5 C6.5 0 12.5 0 12.5 3.5" fill="none" stroke="#cdcdcd" stroke-width="1.5"/><path d="M2.5 5 L3.6 21 H15.4 L16.5 5" fill="none" stroke="#cdcdcd" stroke-width="1.7"/><path d="M6.7 7.5 V18.5 M9.5 7.5 V18.5 M12.3 7.5 V18.5" stroke="#cdcdcd" stroke-width="1.5"/></svg>
<svg style="left:1749px;top:526px;" width="34" height="7" viewBox="0 0 34 7"><rect x="0.0" y="0" width="1.6" height="7" fill="#303030"/><rect x="3.6" y="0" width="1.6" height="7" fill="#303030"/><rect x="7.2" y="0" width="1.6" height="7" fill="#303030"/><rect x="10.8" y="0" width="1.6" height="7" fill="#303030"/><rect x="14.4" y="0" width="1.6" height="7" fill="#303030"/><rect x="18.0" y="0" width="1.6" height="7" fill="#303030"/><rect x="21.6" y="0" width="1.6" height="7" fill="#303030"/><rect x="25.2" y="0" width="1.6" height="7" fill="#303030"/><rect x="28.8" y="0" width="1.6" height="7" fill="#303030"/></svg>
<div style="left:2043.5px;top:123px;width:502.5px;height:20px;background:#424242;"></div>
<div style="left:2045px;top:143px;width:501px;height:1239px;background:#3a3a3a;"></div>
<svg style="left:2088px;top:127px;" width="14" height="9" viewBox="0 0 14 9"><path d="M5.2 0.5 L1 4.5 L5.2 8.5 M12.2 0.5 L8 4.5 L12.2 8.5" fill="none" stroke="#d8d8d8" stroke-width="1.4"/></svg>
<svg style="left:2521px;top:127px;" width="14" height="9" viewBox="0 0 14 9"><path d="M1 0.5 L5.2 4.5 L1 8.5 M8 0.5 L12.2 4.5 L8 8.5" fill="none" stroke="#d8d8d8" stroke-width="1.4"/></svg>
<div style="left:2043.5px;top:144px;width:67.0px;height:69px;background:#535353;"></div>
<div style="left:2043.5px;top:215px;width:67.0px;height:70px;background:#535353;"></div>
<div style="left:2043.5px;top:287px;width:67.0px;height:70px;background:#535353;"></div>
<div style="left:2043.5px;top:359px;width:67.0px;height:1022px;background:#535353;"></div>
<svg style="left:2059px;top:149px;" width="34" height="7" viewBox="0 0 34 7"><rect x="0.0" y="0" width="1.6" height="7" fill="#2e2e2e"/><rect x="3.6" y="0" width="1.6" height="7" fill="#2e2e2e"/><rect x="7.2" y="0" width="1.6" height="7" fill="#2e2e2e"/><rect x="10.8" y="0" width="1.6" height="7" fill="#2e2e2e"/><rect x="14.4" y="0" width="1.6" height="7" fill="#2e2e2e"/><rect x="18.0" y="0" width="1.6" height="7" fill="#2e2e2e"/><rect x="21.6" y="0" width="1.6" height="7" fill="#2e2e2e"/><rect x="25.2" y="0" width="1.6" height="7" fill="#2e2e2e"/><rect x="28.8" y="0" width="1.6" height="7" fill="#2e2e2e"/></svg>
<svg style="left:2059px;top:220px;" width="34" height="7" viewBox="0 0 34 7"><rect x="0.0" y="0" width="1.6" height="7" fill="#2e2e2e"/><rect x="3.6" y="0" width="1.6" height="7" fill="#2e2e2e"/><rect x="7.2" y="0" width="1.6" height="7" fill="#2e2e2e"/><rect x="10.8" y="0" width="1.6" height="7" fill="#2e2e2e"/><rect x="14.4" y="0" width="1.6" height="7" fill="#2e2e2e"/><rect x="18.0" y="0" width="1.6" height="7" fill="#2e2e2e"/><rect x="21.6" y="0" width="1.6" height="7" fill="#2e2e2e"/><rect x="25.2" y="0" width="1.6" height="7" fill="#2e2e2e"/><rect x="28.8" y="0" width="1.6" height="7" fill="#2e2e2e"/></svg>
<svg style="left:2059px;top:292px;" width="34" height="7" viewBox="0 0 34 7"><rect x="0.0" y="0" width="1.6" height="7" fill="#2e2e2e"/><rect x="3.6" y="0" width="1.6" height="7" fill="#2e2e2e"/><rect x="7.2" y="0" width="1.6" height="7" fill="#2e2e2e"/><rect x="10.8" y="0" width="1.6" height="7" fill="#2e2e2e"/><rect x="14.4" y="0" width="1.6" height="7" fill="#2e2e2e"/><rect x="18.0" y="0" width="1.6" height="7" fill="#2e2e2e"/><rect x="21.6" y="0" width="1.6" height="7" fill="#2e2e2e"/><rect x="25.2" y="0" width="1.6" height="7" fill="#2e2e2e"/><rect x="28.8" y="0" width="1.6" height="7" fill="#2e2e2e"/></svg>
<svg style="left:2064px;top:166px;" width="30" height="36" viewBox="0 0 30 36"><rect x="6.5" y="23" width="16" height="12.5" rx="1.5" fill="#cfcfcf"/><path d="M11 23 L6 14 C1 12 0 7 3 3 C7 6 9 10 8.5 13 L14 23 Z" fill="#cfcfcf"/><path d="M13.5 23 L11.5 8 H10 V3 H11.5 V0 H14.5 V3 H16 V8 H14.8 L16.5 23 Z" fill="#cfcfcf"/><path d="M17.5 23 L21.5 12 C17 11 19 6 23 6.5 C27 7 29 10 28.5 13 L23.8 12.5 L20 23 Z" fill="#cfcfcf"/></svg>
<div style="left:2064.5px;top:246px;width:30.0px;height:21px;border:2px solid #d2d2d2;background:linear-gradient(90deg,#3a3a3a,#d8d8d8);"></div>
<svg style="left:2062px;top:311px;" width="34" height="34" viewBox="0 0 34 34"><circle cx="17" cy="17" r="10.5" fill="#cfcfcf"/><circle cx="17" cy="17" r="15" fill="none" stroke="#cfcfcf" stroke-width="1.8" stroke-dasharray="3.2 2.6"/></svg>
<div style="left:2114px;top:144px;width:432px;height:46px;background:#424242;"></div>
<div style="left:2114px;top:191px;width:432px;height:1190px;background:#535353;"></div>
<div style="left:2300px;top:144px;width:93px;height:48px;background:#535353;"></div>
<span class="t" style="left:2131px;top:157.79px;font-size:15.6px;color:#b8b8b8;font-weight:700;width:20.5px;clip-path:inset(-6px 0 -6px 0);letter-spacing:-.3px;">Propriétés</span>
<div style="left:2151.5px;top:145px;width:1.0px;height:45px;background:#393939;"></div>
<span class="t" style="left:2168px;top:157.79px;font-size:15.6px;color:#b8b8b8;font-weight:700;width:21.0px;clip-path:inset(-6px 0 -6px 0);letter-spacing:-.3px;">Bibliothèques</span>
<div style="left:2189.0px;top:145px;width:1.0px;height:45px;background:#393939;"></div>
<span class="t" style="left:2205px;top:157.79px;font-size:15.6px;color:#b8b8b8;font-weight:700;width:20.0px;clip-path:inset(-6px 0 -6px 0);letter-spacing:-.3px;">Couleur</span>
<div style="left:2225.0px;top:145px;width:1.0px;height:45px;background:#393939;"></div>
<span class="t" style="left:2241px;top:157.79px;font-size:15.6px;color:#b8b8b8;font-weight:700;width:21.0px;clip-path:inset(-6px 0 -6px 0);letter-spacing:-.3px;">Styles graphiques</span>
<div style="left:2262.0px;top:145px;width:1.0px;height:45px;background:#393939;"></div>
<span class="t" style="left:2278px;top:157.79px;font-size:15.6px;color:#b8b8b8;font-weight:700;width:21.5px;clip-path:inset(-6px 0 -6px 0);letter-spacing:-.3px;">Options</span>
<span class="t" style="left:2409px;top:157.79px;font-size:15.6px;color:#b8b8b8;font-weight:700;width:20.5px;clip-path:inset(-6px 0 -6px 0);letter-spacing:-.3px;">Contour</span>
<div style="left:2429.5px;top:145px;width:1.0px;height:45px;background:#393939;"></div>
<span class="t" style="left:2446px;top:157.79px;font-size:15.6px;color:#b8b8b8;font-weight:700;width:27.5px;clip-path:inset(-6px 0 -6px 0);letter-spacing:-.3px;">Nuancier</span>
<div style="left:2473.5px;top:145px;width:1.0px;height:45px;background:#393939;"></div>
<div style="left:2474px;top:145px;width:1px;height:45px;background:#393939;"></div>
<span class="t" style="left:2315.5px;top:157.79px;font-size:15.6px;color:#f2f2f2;font-weight:700;letter-spacing:0.204px;">Calques</span>
<svg style="left:2515px;top:161px;" width="18" height="13" viewBox="0 0 18 13"><path d="M0 1 H18 M0 6.5 H18 M0 12 H18" stroke="#c8c8c8" stroke-width="1.7"/></svg>
<div style="left:2123.5px;top:201.5px;width:410.5px;height:1144.0px;border:1px solid #5d5d5d;border-radius:5px;"></div>
<div style="left:2133.5px;top:208.5px;width:348.0px;height:40.0px;background:#454545;border:1px solid #5c5c5c;border-radius:4px;"></div>
<svg style="left:2144.5px;top:219px;" width="22" height="21" viewBox="0 0 22 21"><circle cx="7.8" cy="7.8" r="6.4" fill="none" stroke="#e6e6e6" stroke-width="2.2"/><path d="M12.5 12.5 L20 19.5" stroke="#e6e6e6" stroke-width="3" stroke-linecap="round"/></svg>
<span class="t" style="left:2183.5px;top:219.09px;font-size:20.8px;color:#6b6b6b;letter-spacing:0.083px;">Rechercher dans tout</span>
<svg style="left:2500px;top:216px;" width="24" height="26" viewBox="0 0 24 26"><path d="M0 0 H23.5 L14 12 V22 L9.5 25.5 V12 Z" fill="#cfcfcf"/></svg>
<div style="left:2124.5px;top:265px;width:408.5px;height:35.60000000000002px;background:#4b6584;"></div>
<div style="left:2124.5px;top:300.1px;width:408.5px;height:1.3000000000000114px;background:#4a4a4a;"></div>
<div style="left:2124.5px;top:336.7px;width:408.5px;height:1.3000000000000114px;background:#5f5f5f;"></div>
<div style="left:2124.5px;top:373.3px;width:408.5px;height:1.3000000000000114px;background:#5f5f5f;"></div>
<div style="left:2124.5px;top:409.9px;width:408.5px;height:1.3000000000000114px;background:#5f5f5f;"></div>
<div style="left:2124.5px;top:446.5px;width:408.5px;height:1.3000000000000114px;background:#5f5f5f;"></div>
<div style="left:2160px;top:265px;width:1px;height:35.10000000000002px;background:#5b7390;"></div>
<div style="left:2197px;top:265px;width:1px;height:35.10000000000002px;background:#5b7390;"></div>
<div style="left:2469px;top:265px;width:1px;height:35.10000000000002px;background:#5b7390;"></div>
<svg style="left:2130.5px;top:275.2px;" width="22" height="14" viewBox="0 0 22 14"><path d="M0.5 7 C5 -1.2 17 -1.2 21.5 7 C17 15.2 5 15.2 0.5 7 Z" fill="#c4c4c4"/><circle cx="11" cy="7" r="4.6" fill="#4e4e4e"/><circle cx="11" cy="7" r="2.9" fill="#c4c4c4"/><circle cx="12.4" cy="5.8" r="1.5" fill="#4e4e4e"/></svg>
<div style="left:2199.5px;top:267px;width:5.5px;height:31.100000000000023px;background:#4c80ff;"></div>
<div style="left:2160px;top:301.6px;width:1px;height:35.099999999999966px;background:#5f5f5f;"></div>
<div style="left:2197px;top:301.6px;width:1px;height:35.099999999999966px;background:#5f5f5f;"></div>
<div style="left:2469px;top:301.6px;width:1px;height:35.099999999999966px;background:#5f5f5f;"></div>
<svg style="left:2130.5px;top:311.29999999999995px;" width="22" height="14" viewBox="0 0 22 14"><path d="M0.5 7 C5 -1.2 17 -1.2 21.5 7 C17 15.2 5 15.2 0.5 7 Z" fill="#c4c4c4"/><circle cx="11" cy="7" r="4.6" fill="#4e4e4e"/><circle cx="11" cy="7" r="2.9" fill="#c4c4c4"/><circle cx="12.4" cy="5.8" r="1.5" fill="#4e4e4e"/></svg>
<div style="left:2199.5px;top:302.6px;width:5.5px;height:32.099999999999966px;background:#4c80ff;"></div>
<div style="left:2160px;top:338.2px;width:1px;height:35.10000000000002px;background:#5f5f5f;"></div>
<div style="left:2197px;top:338.2px;width:1px;height:35.10000000000002px;background:#5f5f5f;"></div>
<div style="left:2469px;top:338.2px;width:1px;height:35.10000000000002px;background:#5f5f5f;"></div>
<svg style="left:2130.5px;top:347.9px;" width="22" height="14" viewBox="0 0 22 14"><path d="M0.5 7 C5 -1.2 17 -1.2 21.5 7 C17 15.2 5 15.2 0.5 7 Z" fill="#c4c4c4"/><circle cx="11" cy="7" r="4.6" fill="#4e4e4e"/><circle cx="11" cy="7" r="2.9" fill="#c4c4c4"/><circle cx="12.4" cy="5.8" r="1.5" fill="#4e4e4e"/></svg>
<div style="left:2199.5px;top:339.2px;width:5.5px;height:32.10000000000002px;background:#4c80ff;"></div>
<div style="left:2160px;top:374.8px;width:1px;height:35.099999999999966px;background:#5f5f5f;"></div>
<div style="left:2197px;top:374.8px;width:1px;height:35.099999999999966px;background:#5f5f5f;"></div>
<div style="left:2469px;top:374.8px;width:1px;height:35.099999999999966px;background:#5f5f5f;"></div>
<svg style="left:2130.5px;top:384.5px;" width="22" height="14" viewBox="0 0 22 14"><path d="M0.5 7 C5 -1.2 17 -1.2 21.5 7 C17 15.2 5 15.2 0.5 7 Z" fill="#c4c4c4"/><circle cx="11" cy="7" r="4.6" fill="#4e4e4e"/><circle cx="11" cy="7" r="2.9" fill="#c4c4c4"/><circle cx="12.4" cy="5.8" r="1.5" fill="#4e4e4e"/></svg>
<div style="left:2199.5px;top:375.8px;width:5.5px;height:32.099999999999966px;background:#4c80ff;"></div>
<div style="left:2160px;top:411.4px;width:1px;height:35.10000000000002px;background:#5f5f5f;"></div>
<div style="left:2197px;top:411.4px;width:1px;height:35.10000000000002px;background:#5f5f5f;"></div>
<div style="left:2469px;top:411.4px;width:1px;height:35.10000000000002px;background:#5f5f5f;"></div>
<svg style="left:2130.5px;top:421.09999999999997px;" width="22" height="14" viewBox="0 0 22 14"><path d="M0.5 7 C5 -1.2 17 -1.2 21.5 7 C17 15.2 5 15.2 0.5 7 Z" fill="#c4c4c4"/><circle cx="11" cy="7" r="4.6" fill="#4e4e4e"/><circle cx="11" cy="7" r="2.9" fill="#c4c4c4"/><circle cx="12.4" cy="5.8" r="1.5" fill="#4e4e4e"/></svg>
<div style="left:2199.5px;top:412.4px;width:5.5px;height:32.10000000000002px;background:#4c80ff;"></div>
<svg style="left:2219.5px;top:277.5px;" width="14" height="10" viewBox="0 0 14 10"><path d="M1 1.5 L7 7.5 L13 1.5" fill="none" stroke="#f0f0f0" stroke-width="1.9"/></svg>
<div style="left:2251px;top:268px;width:32px;height:31.5px;background:#fff;border:2px solid #000;"></div>
<svg style="left:2253px;top:270px;" width="28" height="28" viewBox="0 0 28 28"><circle cx="22.5" cy="3.5" r="1.5" fill="#2c3a12"/><path d="M2.1 6.5 C1.2 9.0 2.4 11.8 4.7 12.5 C5.6 10.0 4.4 7.2 2.1 6.5 Z" fill="#98b256"/><path d="M10.3 14.0 C9.3 16.5 10.6 19.3 13.1 20.0 C14.1 17.5 12.8 14.7 10.3 14.0 Z" fill="#98b256"/><path d="M4.8 21.0 C3.9 23.5 5.1 26.3 7.4 27.0 C8.3 24.5 7.1 21.7 4.8 21.0 Z" fill="#98b256"/></svg>
<span class="t" style="left:2291px;top:276.18px;font-size:16.8px;color:#f0f0f0;letter-spacing:-0.086px;">Calque 1</span>
<svg style="left:2481px;top:275.5px;" width="15" height="15" viewBox="0 0 15 15"><circle cx="7.5" cy="7.5" r="6.2" fill="none" stroke="#d6d6d6" stroke-width="1.4"/></svg>
<div style="left:2505.5px;top:278px;width:11.5px;height:10px;background:#4c84ff;border:1.6px solid #111;"></div>
<svg style="left:2522px;top:265px;" width="11" height="11" viewBox="0 0 11 11"><path d="M0 0 H11 V11 Z" fill="#c9c9c9"/></svg>
<div style="left:2291px;top:303.8px;width:31.800000000000182px;height:31.600000000000023px;background:#fff;border:2px solid #000;"></div>
<svg style="left:2293px;top:305.8px;overflow:hidden;" width="27.8" height="27.6" viewBox="0 0 27.8 27.6"><path d="M7.2 -1.5 C2.0 11.3 8.9 26.0 21.8 29.5 C27.0 16.7 20.1 2.0 7.2 -1.5 Z" fill="#98b256"/></svg>
<span class="t" style="left:2331.4px;top:313.08px;font-size:16.8px;color:#f0f0f0;letter-spacing:0.178px;">petale</span>
<svg style="left:2478px;top:308.7px;" width="21" height="21" viewBox="0 0 21 21"><circle cx="10.5" cy="10.5" r="9.6" fill="none" stroke="#d6d6d6" stroke-width="1.3"/><circle cx="10.5" cy="10.5" r="6" fill="none" stroke="#d6d6d6" stroke-width="1.4"/></svg>
<div style="left:2506.3px;top:312.4px;width:14.0px;height:13.600000000000023px;background:#4c84ff;border:1.6px solid #111;"></div>
<div style="left:2291px;top:340.4px;width:31.800000000000182px;height:31.600000000000023px;background:#fff;border:2px solid #000;"></div>
<svg style="left:2293px;top:342.4px;" width="27.8" height="27.6" viewBox="0 0 27.8 27.6"><defs><radialGradient id="pgc1" cx="50%" cy="14%" r="92%"><stop offset="0" stop-color="#e6ea4a"/><stop offset=".42" stop-color="#b2d03c"/><stop offset=".72" stop-color="#62b436"/><stop offset="1" stop-color="#2f9d3a"/></radialGradient><linearGradient id="prc1" x1="0" y1="0" x2="0" y2="1"><stop offset="0" stop-color="#f7f7f9"/><stop offset="1" stop-color="#dfdfe3"/></linearGradient><linearGradient id="ptc1" x1="0" y1="0" x2="1" y2="0"><stop offset="0" stop-color="#0c0c0c"/><stop offset="1" stop-color="#4a4f58"/></linearGradient></defs><circle cx="13.9" cy="13.8" r="13.2" fill="url(#prc1)" stroke="#bfbfc6" stroke-width="0.60"/><circle cx="13.9" cy="13.8" r="9.46" fill="url(#pgc1)" stroke="#4f8f26" stroke-width="0.70"/><path d="M10.56 9.36 L18.70 13.80 L10.56 18.24 Z" fill="url(#ptc1)"/></svg>
<span class="t" style="left:2331.4px;top:349.68px;font-size:16.8px;color:#f0f0f0;letter-spacing:0.138px;">Puce 1 -...</span>
<svg style="left:2481px;top:348.3px;" width="15" height="15" viewBox="0 0 15 15"><circle cx="7.5" cy="7.5" r="6.2" fill="none" stroke="#d6d6d6" stroke-width="1.4"/></svg>
<div style="left:2291px;top:377.0px;width:31.800000000000182px;height:31.600000000000023px;background:#fff;border:2px solid #000;"></div>
<svg style="left:2293px;top:379.0px;overflow:hidden;" width="27.8" height="27.6" viewBox="0 0 27.8 27.6"><path d="M7.2 -1.5 C2.0 11.3 8.9 26.0 21.8 29.5 C27.0 16.7 20.1 2.0 7.2 -1.5 Z" fill="#98b256"/></svg>
<span class="t" style="left:2331.4px;top:387.28px;font-size:16.8px;color:#f0f0f0;letter-spacing:0.178px;">petale</span>
<svg style="left:2481px;top:384.90000000000003px;" width="15" height="15" viewBox="0 0 15 15"><circle cx="7.5" cy="7.5" r="6.2" fill="none" stroke="#d6d6d6" stroke-width="1.4"/></svg>
<div style="left:2291px;top:413.59999999999997px;width:31.800000000000182px;height:31.600000000000023px;background:#fff;border:2px solid #000;"></div>
<svg style="left:2293px;top:415.59999999999997px;overflow:hidden;" width="27.8" height="27.6" viewBox="0 0 27.8 27.6"><path d="M7.2 -1.5 C2.0 11.3 8.9 26.0 21.8 29.5 C27.0 16.7 20.1 2.0 7.2 -1.5 Z" fill="#98b256"/></svg>
<span class="t" style="left:2331.4px;top:422.88px;font-size:16.8px;color:#f0f0f0;letter-spacing:0.178px;">petale</span>
<svg style="left:2481px;top:421.5px;" width="15" height="15" viewBox="0 0 15 15"><circle cx="7.5" cy="7.5" r="6.2" fill="none" stroke="#d6d6d6" stroke-width="1.4"/></svg>
<span class="t" style="left:2124px;top:1356.78px;font-size:16.8px;color:#e6e6e6;letter-spacing:-0.084px;">1 Cal...</span>
<svg style="left:2204.5px;top:1354.5px;" width="25" height="22" viewBox="0 0 25 22"><path d="M3 3 H20 V12 M3 3 V18 H14" fill="none" stroke="#d0d0d0" stroke-width="1.8"/><rect x="0.5" y="0.5" width="4.6" height="4.6" rx="1" fill="#d0d0d0"/><rect x="17.7" y="0.5" width="4.6" height="4.6" rx="1" fill="#d0d0d0"/><rect x="0.5" y="15.7" width="4.6" height="4.6" rx="1" fill="#d0d0d0"/><path d="M14.5 10.5 H23.5 V22 L19 18 L14.5 22 Z" fill="#d0d0d0"/></svg>
<svg style="left:2248px;top:1353px;" width="22" height="21" viewBox="0 0 22 21"><path d="M9 5.5 H1 V20 H17 V12" fill="none" stroke="#d0d0d0" stroke-width="1.8"/><path d="M9 12 L20 1 M12.5 1 H20.5 V9" fill="none" stroke="#d0d0d0" stroke-width="1.8"/></svg>
<svg style="left:2292px;top:1353px;" width="23" height="22" viewBox="0 0 23 22"><circle cx="8.3" cy="8.3" r="6.8" fill="none" stroke="#d0d0d0" stroke-width="2"/><path d="M13.3 13.3 L21 20.5" stroke="#d0d0d0" stroke-width="2.8" stroke-linecap="round"/></svg>
<svg style="left:2339px;top:1355px;" width="20" height="19" viewBox="0 0 20 19"><rect x="0.8" y="0.8" width="11.5" height="11.5" fill="none" stroke="#6c6c6c" stroke-width="1.5"/><rect x="6.2" y="6.5" width="11.8" height="11.5" fill="none" stroke="#6c6c6c" stroke-width="1.5"/><rect x="4" y="4" width="8.5" height="8.5" fill="#646464"/></svg>
<svg style="left:2380px;top:1354.5px;" width="28" height="19" viewBox="0 0 28 19"><path d="M1.5 0 V7 H6" fill="none" stroke="#d0d0d0" stroke-width="1.7"/><path d="M5.5 2.5 L11 7 L5.5 11.5 Z" fill="#d0d0d0"/><rect x="11.3" y="3.3" width="14.5" height="14" fill="none" stroke="#d0d0d0" stroke-width="1.7"/><path d="M14.5 10.3 h8 M18.5 6.3 v8" stroke="#d0d0d0" stroke-width="1.6"/></svg>
<svg style="left:2430.5px;top:1355px;" width="20" height="19" viewBox="0 0 20 19"><rect x="1" y="1" width="17.5" height="17" fill="none" stroke="#d0d0d0" stroke-width="1.7"/><path d="M5.5 9.5 h8.5 M9.75 5.3 v8.5" stroke="#d0d0d0" stroke-width="1.6"/></svg>
<svg style="left:2475px;top:1353.5px;" width="19" height="21" viewBox="0 0 19 21"><path d="M0 3.8 H19" stroke="#6c6c6c" stroke-width="1.5"/><path d="M6.5 3.3 C6.5 0 12.5 0 12.5 3.3" fill="none" stroke="#6c6c6c" stroke-width="1.4"/><path d="M2.5 4.5 L3.6 20 H15.4 L16.5 4.5" fill="none" stroke="#6c6c6c" stroke-width="1.5"/><path d="M6.7 7 V17.5 M9.5 7 V17.5 M12.3 7 V17.5" stroke="#6c6c6c" stroke-width="1.4"/></svg>
<div style="left:2545px;top:63px;width:1.5px;height:1320px;background:#2e2e2e;"></div>
</div></body></html>
